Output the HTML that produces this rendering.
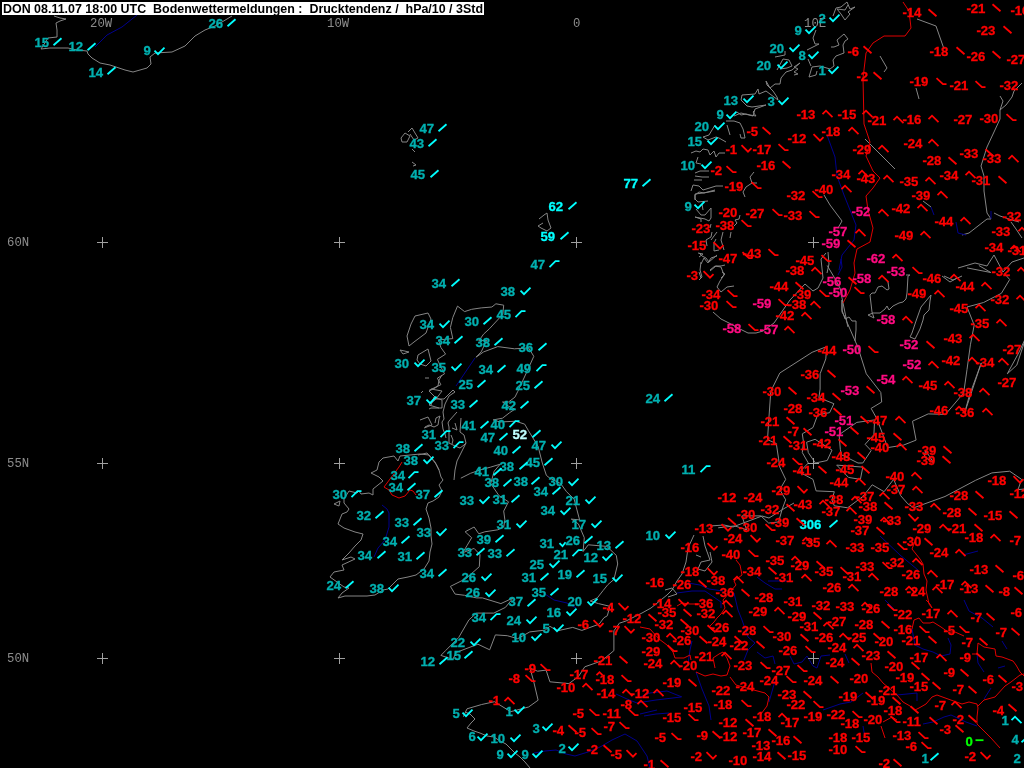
<!DOCTYPE html>
<html><head><meta charset="utf-8"><style>
html,body{margin:0;padding:0;background:#000;overflow:hidden}
svg{display:block;will-change:transform}
</style></head><body>
<svg width="1024" height="768" viewBox="0 0 1024 768">
<rect width="1024" height="768" fill="#000"/>
<g fill="none" stroke-width="1"><polyline points="607.3,615.8 609.9,606.3 598.5,603.6 590.2,601.0 597.3,597.9 603.3,590.3 608.0,584.5 613.9,579.5 617.7,564.0 616.3,555.4 606.8,546.4 588.3,544.8 583.1,551.5 584.3,537.7 578.4,523.9 571.3,519.1 579.6,519.9 574.1,499.0 566.5,491.7 560.6,483.5 549.9,478.2 546.4,475.4 542.3,463.0 538.1,446.4 528.6,430.9 524.6,424.1 515.6,421.2 500.2,422.0 493.1,419.9 502.5,418.2 509.6,412.7 514.9,409.2 508.5,406.2 502.5,402.0 508.5,402.0 514.9,397.2 517.9,391.2 526.9,371.7 533.8,356.3 528.6,347.9 514.4,348.8 497.8,346.6 483.6,351.9 476.0,357.2 481.2,351.9 486.7,340.3 478.8,340.8 483.6,334.1 489.5,328.7 502.8,314.3 503.7,305.2 495.9,303.8 491.9,307.0 481.2,307.9 471.7,309.3 464.6,311.6 457.5,306.1" stroke="#858585" stroke-width="1"/><polyline points="457.5,306.1 452.8,317.5 450.4,327.4 452.8,338.6 438.5,339.9 440.9,347.5 445.6,354.1 437.4,359.4 440.4,366.0 444.5,373.8 437.4,378.2 440.9,384.7 429.1,390.3" stroke="#858585" stroke-width="1"/><polyline points="460.8,478.2 470.5,473.3 480.0,470.0 490.7,467.1 500.2,464.2 494.2,471.2 490.7,483.5 499.0,495.7 508.5,501.8 503.7,511.1 504.9,519.9 503.7,527.0 497.8,529.8 484.8,531.8 478.8,533.8 474.1,527.0 465.1,531.8 471.7,537.7 467.0,545.6 462.7,552.7 474.1,548.4 480.0,554.7 479.3,566.7 465.8,578.7 450.4,586.4 455.1,594.1 464.6,595.3 476.5,597.9 482.4,597.9 500.9,603.6 513.2,597.9 505.4,607.4 493.8,613.1 476.5,613.1 468.9,619.9 458.7,637.5 445.6,650.6 440.9,655.4 452.8,659.4 456.3,652.4 477.9,644.2 489.7,649.8 495.4,634.9 507.3,635.7 517.7,638.7 529.8,631.9 545.2,630.1 549.9,626.3 557.5,630.8 572.7,627.4 581.9,630.4 599.2,624.1 604.0,617.7 607.3,615.8" stroke="#858585" stroke-width="1"/><polyline points="826.7,346.6 812.1,352.3 779.8,373.0 770.8,391.2 768.7,421.2 767.5,439.7 776.3,443.5 778.6,458.9 779.8,467.1 785.7,479.4 779.8,489.6 785.7,499.8 782.2,509.1 778.6,521.9 768.7,523.1 760.9,515.9 741.9,515.9 746.6,529.8 734.8,525.9 718.2,527.8" stroke="#858585" stroke-width="1"/><polyline points="619.8,622.6 619.8,622.6 613.9,630.8 613.9,650.6 601.6,660.9 584.8,666.8 578.4,676.6 568.9,683.6 549.9,681.8 546.1,670.1 537.6,671.2 530.0,668.2 533.3,679.9 538.1,700.2 528.6,707.0 510.6,711.7 494.5,701.7 481.7,704.5 467.0,708.8 463.4,716.7" stroke="#858585" stroke-width="1"/><polyline points="826.7,346.6 825.8,358.9 820.1,373.8 820.1,389.0 818.9,397.7 833.9,403.7 829.6,412.7 817.7,414.8 813.0,427.5 802.3,433.8 803.5,442.2 802.3,452.6 808.3,463.0 799.5,472.1 813.0,479.4 816.1,490.9 834.3,491.7 832.0,499.8 834.3,505.8 847.6,507.8 862.8,496.5 872.2,484.8 884.1,491.7 893.6,479.4 900.7,495.7 907.8,503.8 913.7,507.8 945.0,496.5 975.6,480.3 991.9,472.9 1009.7,471.2 1021.6,479.4 1018.0,489.6 1040.5,487.6" stroke="#858585" stroke-width="1"/><polyline points="815.1,439.3 826.0,446.4 832.0,450.1 827.2,460.5 815.4,463.0 808.3,452.6 806.6,442.2 815.1,439.3" stroke="#858585" stroke-width="1"/><polyline points="874.6,419.9 873.9,434.7 865.1,444.3 871.1,450.6 862.8,463.0 858.0,463.0 841.4,454.7 840.3,449.3 839.1,434.7 856.8,422.4 874.6,419.9" stroke="#858585" stroke-width="1"/><polyline points="836.7,465.1 848.5,477.4 860.4,479.4 862.8,467.1 836.7,465.1" stroke="#858585" stroke-width="1"/><polyline points="925.6,450.6 933.9,463.0 924.4,456.8 925.6,450.6" stroke="#858585" stroke-width="1"/><polyline points="827.2,265.5 835.5,279.5 840.3,288.7 840.7,291.5 846.9,322.0 858.0,347.5 866.3,373.8 880.8,392.5 881.7,402.0 871.1,408.4 877.0,419.0 884.1,438.0 887.7,447.6 903.5,445.1 916.1,440.1 912.5,421.2 928.2,413.9 945.5,414.4 963.7,392.9 967.0,369.5 970.4,344.8 974.2,325.1 967.0,307.0 983.6,302.5 1001.4,293.3 1009.7,279.5 1004.3,273.5" stroke="#858585" stroke-width="1"/><polyline points="1097.4,39.7 1104.5,66.5 1087.9,87.6 1078.4,118.8 1085.5,169.2 1080.8,203.6 1103.8,220.5 1109.2,242.0 1120.4,250.5 1144.8,242.0 1168.5,232.5" stroke="#858585" stroke-width="1"/><polyline points="981.3,362.9 964.7,412.7 969.4,395.5 981.3,362.9" stroke="#858585" stroke-width="1"/><polyline points="1026.3,336.3 1019.2,351.9 1007.3,373.8 1016.8,365.1 1026.3,336.3" stroke="#858585" stroke-width="1"/><polyline points="967.0,267.9 990.8,272.5 978.9,265.5" stroke="#858585" stroke-width="1"/><polyline points="54.0,16.0 60.0,18.0 66.0,19.0 60.0,21.0 56.0,23.0 57.0,30.0 57.0,37.0 48.0,38.0 41.0,49.0 50.0,48.0 68.0,48.0 77.0,50.0 87.0,51.0 88.0,54.0 92.0,58.0 100.0,63.0 110.0,65.0 125.0,70.0 133.0,72.0 147.0,68.0 151.0,64.0 150.0,57.0 155.0,53.0 172.0,52.0 185.0,46.0 195.0,36.0 205.0,30.0 215.0,26.0 222.0,22.0 232.0,16.0" stroke="#858585" stroke-width="1"/><polyline points="539.0,219.0 544.0,215.0 547.0,213.0 548.0,220.0 551.0,228.0 547.0,231.0 541.0,228.0 538.0,226.0 543.0,223.0" stroke="#858585" stroke-width="1"/><polyline points="371.0,473.0 377.0,470.0 379.0,462.0 383.0,458.0 394.0,456.0 398.0,461.0 400.0,456.0 410.0,455.0 420.0,454.0 429.0,455.0 435.0,462.0 439.0,470.0 441.0,477.0 443.0,480.0 439.0,485.0 442.0,491.0 439.0,497.0 433.0,501.0 428.0,503.0 426.0,509.0 429.0,518.0 431.0,528.0 431.0,536.0 432.0,544.0 430.0,552.0 429.0,561.0 424.0,569.0 416.0,575.0 408.0,577.0 398.0,579.0 388.0,589.0 383.0,590.0 375.0,595.0 367.0,596.0 359.0,596.0 345.0,596.0 338.0,598.0 342.0,593.0 349.0,588.0 344.0,587.0 330.0,577.0 334.0,572.0 344.0,570.0 342.0,565.0 355.0,559.0 351.0,557.0 342.0,560.0 349.0,553.0 355.0,546.0 361.0,540.0 363.0,534.0 355.0,532.0 344.0,528.0 338.0,524.0 342.0,514.0 347.0,512.0 349.0,509.0 344.0,503.0 344.0,499.0 349.0,491.0 357.0,493.0 359.0,491.0 361.0,494.0 369.0,493.0 373.0,495.0 373.0,489.0 383.0,481.0 379.0,477.0 371.0,473.0" stroke="#858585" stroke-width="1"/><polyline points="334.0,504.0 340.0,501.0 339.0,506.0 334.0,504.0" stroke="#858585" stroke-width="1"/><polyline points="401.0,138.0 405.0,133.0 410.0,136.0 407.0,142.0 402.0,142.0 401.0,138.0" stroke="#858585" stroke-width="1"/><polyline points="408.0,132.0 412.0,128.0 415.0,133.0 418.0,138.0 414.0,140.0 410.0,134.0" stroke="#858585" stroke-width="1"/><polyline points="412.0,149.0 415.0,152.0" stroke="#858585" stroke-width="1"/><polyline points="412.0,162.0 416.0,165.0 413.0,166.0" stroke="#858585" stroke-width="1"/><polyline points="411.0,324.0 415.0,316.0 428.0,313.0 431.0,319.0 426.0,333.0 414.0,342.0 409.0,346.0 407.0,336.0 411.0,324.0" stroke="#858585" stroke-width="1"/><polyline points="400.0,350.0 409.0,352.0 403.0,354.0 400.0,350.0" stroke="#858585" stroke-width="1"/><polyline points="418.0,355.0 428.0,349.0 431.0,361.0 426.0,366.0 420.0,364.0 417.0,360.0 418.0,355.0" stroke="#858585" stroke-width="1"/><polyline points="431.0,389.0 442.0,391.0 436.0,399.0 429.0,405.0 439.0,408.0" stroke="#858585" stroke-width="1"/><polyline points="420.0,420.0 428.0,417.0 432.0,425.0 424.0,428.0" stroke="#858585" stroke-width="1"/><polyline points="833.0,16.0 836.0,8.0 841.0,7.0 847.0,2.0 850.0,9.0 855.0,7.0 848.0,12.0 850.0,14.0 845.0,20.0 841.0,14.0 837.0,9.0 845.0,10.0 848.0,5.0" stroke="#858585" stroke-width="1"/><polyline points="816.0,30.0 813.0,38.0 815.0,44.0 819.0,44.0 807.0,50.0" stroke="#858585" stroke-width="1"/><polyline points="844.0,34.0 848.0,39.0 845.0,41.0 843.0,45.0 844.0,53.0 836.0,56.0 833.0,60.0 834.0,66.0 830.0,69.0 820.0,66.0 812.0,67.0 809.0,77.0 816.0,75.0 817.0,71.0" stroke="#858585" stroke-width="1"/><polyline points="808.0,59.0 811.0,66.0" stroke="#858585" stroke-width="1"/><polyline points="831.0,47.0 834.0,47.0 839.0,45.0 837.0,40.0 844.0,34.0" stroke="#858585" stroke-width="1"/><polyline points="775.0,57.0 785.0,55.0 785.0,51.0" stroke="#858585" stroke-width="1"/><polyline points="777.0,70.0 783.0,59.0 789.0,60.0 792.0,66.0 787.0,68.0 780.0,69.0" stroke="#858585" stroke-width="1"/><polyline points="800.0,63.0 794.0,67.0 798.0,69.0 794.0,72.0 798.0,74.0 794.0,75.0" stroke="#858585" stroke-width="1"/><polyline points="800.0,63.0 792.0,70.0 786.0,72.0 781.0,78.0 780.0,84.0 775.0,84.0 770.0,88.0 766.0,81.0 767.0,85.0 773.0,91.0 777.0,97.0 778.0,100.0 766.0,91.0 759.0,94.0 758.0,89.0 755.0,94.0 742.0,95.0 741.0,100.0 747.0,106.0 752.0,107.0 766.0,105.0 755.0,109.0 753.0,116.0 741.0,113.0 734.0,116.0" stroke="#858585" stroke-width="1"/><polyline points="737.0,112.0 741.0,115.0 746.0,114.0 750.0,115.0 756.0,116.0 753.0,112.0 755.0,110.0" stroke="#858585" stroke-width="1"/><polyline points="726.0,121.0 734.0,121.0 740.0,123.0 743.0,129.0 744.0,133.0 745.0,138.0 741.0,138.0 740.0,134.0" stroke="#858585" stroke-width="1"/><polyline points="727.0,125.0 730.0,135.0" stroke="#858585" stroke-width="1"/><polyline points="715.0,125.0 709.0,135.0 703.0,137.0 708.0,140.0 716.0,137.0 719.0,138.0 726.0,142.0" stroke="#858585" stroke-width="1"/><polyline points="691.0,153.0 696.0,151.0 700.0,152.0 703.0,149.0 708.0,150.0 710.0,155.0 714.0,151.0 716.0,157.0 719.0,153.0 725.0,153.0" stroke="#858585" stroke-width="1"/><polyline points="698.0,157.0 696.0,163.0 701.0,164.0" stroke="#858585" stroke-width="1"/><polyline points="695.0,173.0 700.0,171.0 709.0,171.0" stroke="#858585" stroke-width="1"/><polyline points="695.0,176.0 702.0,177.0 709.0,177.0" stroke="#858585" stroke-width="1"/><polyline points="694.0,180.0 702.0,180.0" stroke="#858585" stroke-width="1"/><polyline points="691.0,191.0 693.0,185.0 699.0,186.0 703.0,190.0 716.0,186.0 723.0,186.0" stroke="#858585" stroke-width="1"/><polyline points="715.0,191.0 703.0,193.0 695.0,194.0 695.0,200.0" stroke="#858585" stroke-width="1"/><polyline points="754.0,172.0 750.0,177.0 752.0,183.0 746.0,187.0 743.0,192.0 745.0,197.0" stroke="#858585" stroke-width="1"/><polyline points="752.0,183.0 757.0,183.0" stroke="#858585" stroke-width="1"/><polyline points="715.0,190.0 704.0,193.0 699.0,192.0 695.0,195.0 695.0,199.0 698.0,202.0 708.0,201.0" stroke="#858585" stroke-width="1"/><polyline points="696.0,209.0 701.0,215.0 705.0,215.0 711.0,208.0 711.0,218.0 709.0,221.0 705.0,219.0 695.0,217.0 701.0,219.0 701.0,222.0" stroke="#858585" stroke-width="1"/><polyline points="702.0,204.0 703.0,210.0" stroke="#858585" stroke-width="1"/><polyline points="740.0,215.0 739.0,219.0 735.0,220.0 737.0,223.0 734.0,226.0" stroke="#858585" stroke-width="1"/><polyline points="711.0,224.0 710.0,228.0" stroke="#858585" stroke-width="1"/><polyline points="712.0,232.0 711.0,237.0 706.0,240.0 707.0,246.0" stroke="#858585" stroke-width="1"/><polyline points="711.0,240.0 717.0,232.0" stroke="#858585" stroke-width="1"/><polyline points="716.0,239.0 714.0,243.0 714.0,251.0 719.0,250.0" stroke="#858585" stroke-width="1"/><polyline points="723.0,232.0 721.0,240.0 724.0,250.0" stroke="#858585" stroke-width="1"/><polyline points="731.0,232.0 730.0,238.0" stroke="#858585" stroke-width="1"/><polyline points="698.0,253.0 703.0,254.0 699.0,257.0" stroke="#858585" stroke-width="1"/><polyline points="701.0,264.0 704.0,258.0 708.0,263.0 711.0,258.0 717.0,256.0" stroke="#858585" stroke-width="1"/><polyline points="699.0,272.0 701.0,278.0" stroke="#858585" stroke-width="1"/><polyline points="710.0,271.0 716.0,266.0 721.0,266.0 725.0,265.0" stroke="#858585" stroke-width="1"/><polyline points="722.0,272.0 725.0,274.0 721.0,278.0" stroke="#858585" stroke-width="1"/><polyline points="699.0,253.0 702.0,256.0 706.0,258.0 709.0,262.0 717.0,255.0" stroke="#858585" stroke-width="1"/><polyline points="701.0,262.0 700.0,270.0 702.0,277.0 699.0,280.0" stroke="#858585" stroke-width="1"/><polyline points="710.0,270.0 715.0,266.0 721.0,267.0 724.0,275.0 720.0,281.0 717.0,287.0 721.0,292.0 727.0,287.0 734.0,286.0" stroke="#858585" stroke-width="1"/><polyline points="713.0,312.0 721.0,319.0 729.0,323.0 742.0,330.0 748.0,333.0 756.0,333.0 763.0,331.0 774.0,323.0 790.0,300.0 805.0,284.0 813.0,291.0 818.0,288.0 823.0,278.0 821.0,259.0 826.0,253.0" stroke="#858585" stroke-width="1"/><polyline points="827.0,273.0 829.0,264.0 828.0,252.0" stroke="#858585" stroke-width="1"/><polyline points="842.0,300.0 842.0,312.0 846.0,319.0 848.0,327.0" stroke="#858585" stroke-width="1"/><polyline points="906.0,275.0 910.0,275.0 908.0,276.0 907.0,293.0 906.0,299.0 903.0,302.0 899.0,303.0 893.0,306.0 889.0,310.0 887.0,306.0 885.0,309.0 880.0,313.0 873.0,313.0 868.0,315.0 874.0,318.0 872.0,312.0 870.0,295.0 872.0,293.0 875.0,293.0 878.0,287.0 882.0,286.0 887.0,290.0 889.0,289.0 888.0,282.0 885.0,278.0" stroke="#858585" stroke-width="1"/><polyline points="931.0,295.0 930.0,301.0 929.0,310.0 924.0,315.0 923.0,320.0 920.0,329.0 915.0,339.0 910.0,337.0 912.0,333.0 916.0,321.0 921.0,307.0 926.0,301.0 931.0,295.0" stroke="#858585" stroke-width="1"/><polyline points="842.0,300.0 842.0,310.0 845.0,319.0 849.0,317.0 852.0,321.0 856.0,321.0 856.0,330.0 855.0,341.0" stroke="#858585" stroke-width="1"/><polyline points="942.0,276.0 950.0,282.0 957.0,278.0" stroke="#858585" stroke-width="1"/><polyline points="917.0,19.0 936.0,26.0 944.0,49.0" stroke="#858585" stroke-width="1"/><polyline points="880.0,56.0 887.0,68.0 884.0,72.0" stroke="#858585" stroke-width="1"/><polyline points="916.0,88.0 919.0,99.0" stroke="#858585" stroke-width="1"/><polyline points="1022.0,83.0 1014.0,91.0 1012.0,97.0 1006.0,105.0 1000.0,110.0 1003.0,101.0 1000.0,96.0" stroke="#858585" stroke-width="1"/><polyline points="1000.0,110.0 1000.0,119.0 994.0,132.0 987.0,147.0 981.0,166.0 984.0,176.0 984.0,191.0 987.0,213.0 991.0,219.0 987.0,219.0 978.0,226.0 969.0,233.0 962.0,235.0" stroke="#858585" stroke-width="1"/><polyline points="994.0,213.0 1000.0,216.0 1009.0,219.0 1019.0,222.0" stroke="#858585" stroke-width="1"/><polyline points="1011.0,222.0 1016.0,229.0 1022.0,238.0" stroke="#858585" stroke-width="1"/><polyline points="958.0,268.0 975.0,263.0 987.0,266.0 994.0,255.0 1003.0,272.0 1012.0,262.0 1024.0,258.0" stroke="#858585" stroke-width="1"/><polyline points="944.0,276.0 953.0,280.0 962.0,276.0" stroke="#858585" stroke-width="1"/><polyline points="923.0,201.0 931.0,207.0" stroke="#858585" stroke-width="1"/><polyline points="824.0,195.0 830.0,205.0 842.0,221.0 838.0,228.0" stroke="#858585" stroke-width="1"/><polyline points="865.0,139.0 880.0,154.0 895.0,169.0" stroke="#858585" stroke-width="1"/><polyline points="667.0,595.0 651.0,608.0 642.0,613.0 626.0,621.0 620.0,623.0" stroke="#858585" stroke-width="1"/><polyline points="694.0,535.0 688.0,548.0 686.0,562.0 682.0,574.0 677.0,581.0 672.0,590.0 667.0,595.0" stroke="#858585" stroke-width="1"/><polyline points="703.0,536.0 705.0,546.0 710.0,560.0 701.0,562.0 698.0,569.0 705.0,571.0 712.0,562.0 710.0,552.0" stroke="#858585" stroke-width="1"/><polyline points="696.0,555.0 701.0,557.0" stroke="#858585" stroke-width="1"/><polyline points="665.0,590.0 672.0,588.0 677.0,594.0 668.0,597.0" stroke="#858585" stroke-width="1"/><polyline points="710.0,526.0 724.0,525.0 733.0,527.0 738.0,525.0 762.0,516.0 769.0,518.0 785.0,508.0 794.0,503.0" stroke="#858585" stroke-width="1"/><polyline points="465.0,712.0 470.0,714.0 475.0,719.0 471.0,723.0 467.0,728.0 474.0,731.0 480.0,733.0 487.0,736.0 494.0,737.0 500.0,741.0 506.0,744.0 510.0,748.0 515.0,753.0 520.0,757.0 525.0,762.0 530.0,768.0" stroke="#858585" stroke-width="1"/><polyline points="453.0,390.0 448.0,395.0 444.0,399.0 436.0,399.0 435.0,397.0 431.0,393.0 429.0,391.0 435.0,388.0 438.0,386.0 439.0,380.0 442.0,375.0" stroke="#858585" stroke-width="1"/><polyline points="429.0,409.0 431.0,408.0 442.0,408.0 442.0,400.0 434.0,397.0 431.0,405.0" stroke="#858585" stroke-width="1"/><polyline points="453.0,390.0 455.0,392.0 449.0,396.0 445.0,404.0 443.0,412.0 444.0,419.0 442.0,422.0 443.0,429.0 445.0,434.0 446.0,438.0" stroke="#858585" stroke-width="1"/><polyline points="425.0,427.0 429.0,425.0 434.0,427.0 438.0,425.0 439.0,419.0 440.0,416.0 436.0,418.0 435.0,423.0" stroke="#858585" stroke-width="1"/><polyline points="457.0,412.0 449.0,421.0 448.0,423.0 449.0,427.0 449.0,443.0 455.0,446.0 460.0,448.0 464.0,445.0 466.0,443.0 464.0,435.0 460.0,432.0 461.0,418.0" stroke="#858585" stroke-width="1"/><polyline points="451.0,435.0 453.0,440.0 452.0,444.0" stroke="#858585" stroke-width="1"/><polyline points="455.0,423.0 457.0,430.0 452.0,428.0" stroke="#858585" stroke-width="1"/><polyline points="466.0,443.0 461.0,453.0 457.0,461.0 455.0,470.0 454.0,480.0" stroke="#858585" stroke-width="1"/><polyline points="418.0,455.0 427.0,453.0 432.0,459.0 436.0,464.0 439.0,470.0" stroke="#858585" stroke-width="1"/><polyline points="421.0,393.0 423.0,391.0" stroke="#858585" stroke-width="1"/><polyline points="425.0,378.0 429.0,378.0" stroke="#858585" stroke-width="1"/><polyline points="534.0,753.0 545.0,751.0 556.0,750.0 566.0,754.0 575.0,756.0 588.0,752.0 600.0,747.0 612.0,740.0 625.0,734.0 637.0,741.0 647.0,756.0 650.0,768.0" stroke="#00008c" stroke-width="1"/><polyline points="616.0,694.0 627.0,699.0 637.0,703.0 656.0,700.0 681.0,697.0" stroke="#00008c" stroke-width="1"/><polyline points="644.0,716.0 656.0,714.0 669.0,713.0" stroke="#00008c" stroke-width="1"/><polyline points="880.0,536.0 900.0,555.0 918.0,570.0" stroke="#00008c" stroke-width="1"/><polyline points="963.0,555.0 978.0,551.0" stroke="#00008c" stroke-width="1"/><polyline points="768.0,581.0 787.0,581.0" stroke="#00008c" stroke-width="1"/><polyline points="885.0,600.0 894.0,609.0" stroke="#00008c" stroke-width="1"/><polyline points="964.0,600.0 969.0,611.0 982.0,618.0 993.0,627.0" stroke="#00008c" stroke-width="1"/><polyline points="912.0,629.0 915.0,645.0 923.0,649.0 933.0,652.0 941.0,656.0 950.0,654.0 951.0,645.0 948.0,638.0" stroke="#00008c" stroke-width="1"/><polyline points="977.0,654.0 978.0,663.0 984.0,672.0" stroke="#00008c" stroke-width="1"/><polyline points="1002.0,641.0 1007.0,649.0" stroke="#00008c" stroke-width="1"/><polyline points="998.0,668.0 1005.0,666.0" stroke="#00008c" stroke-width="1"/><polyline points="991.0,688.0 984.0,699.0" stroke="#00008c" stroke-width="1"/><polyline points="897.0,695.0 917.0,693.0 917.0,701.0" stroke="#00008c" stroke-width="1"/><polyline points="923.0,724.0 933.0,722.0 944.0,717.0 951.0,715.0 966.0,722.0 977.0,726.0" stroke="#00008c" stroke-width="1"/><polyline points="840.0,704.0 851.0,702.0 863.0,693.0" stroke="#00008c" stroke-width="1"/><polyline points="845.0,654.0 849.0,663.0" stroke="#00008c" stroke-width="1"/><polyline points="863.0,726.0 865.0,738.0" stroke="#00008c" stroke-width="1"/><polyline points="757.0,577.0 765.0,583.0 775.0,589.0 782.0,589.0" stroke="#00008c" stroke-width="1"/><polyline points="688.0,583.0 700.0,585.0 709.0,589.0 723.0,591.0" stroke="#00008c" stroke-width="1"/><polyline points="677.0,593.0 692.0,591.0 705.0,591.0 721.0,602.0 721.0,608.0" stroke="#00008c" stroke-width="1"/><polyline points="734.0,593.0 738.0,610.0 742.0,620.0 748.0,637.0 755.0,643.0 748.0,650.0 744.0,660.0" stroke="#00008c" stroke-width="1"/><polyline points="757.0,652.0 765.0,658.0 773.0,656.0 775.0,664.0" stroke="#00008c" stroke-width="1"/><polyline points="790.0,656.0 794.0,664.0 802.0,662.0 807.0,656.0 813.0,666.0 817.0,668.0 821.0,656.0 830.0,655.0" stroke="#00008c" stroke-width="1"/><polyline points="692.0,641.0 690.0,650.0 688.0,664.0" stroke="#00008c" stroke-width="1"/><polyline points="696.0,672.0 702.0,689.0 709.0,706.0 711.0,720.0" stroke="#00008c" stroke-width="1"/><polyline points="640.0,697.0 650.0,693.0 667.0,691.0 682.0,697.0" stroke="#00008c" stroke-width="1"/><polyline points="775.0,681.0 769.0,702.0" stroke="#00008c" stroke-width="1"/><polyline points="823.0,710.0 840.0,704.0" stroke="#00008c" stroke-width="1"/><polyline points="640.0,714.0 657.0,710.0" stroke="#00008c" stroke-width="1"/><polyline points="545.0,594.0 554.0,600.0 567.0,603.0 576.0,608.0" stroke="#00008c" stroke-width="1"/><polyline points="137.0,15.0 122.0,27.0 107.0,35.0 95.0,47.0" stroke="#00008c" stroke-width="1"/><polyline points="382.0,505.0 387.0,509.0 389.0,513.0 389.0,527.0 385.0,540.0 378.0,548.0 374.0,557.0" stroke="#00008c" stroke-width="1"/><polyline points="475.0,358.0 456.0,386.0" stroke="#00008c" stroke-width="1"/><polyline points="903.0,2.0 909.0,11.0 911.0,28.0 905.0,36.0 884.0,36.0 873.0,43.0 866.0,53.0 863.0,78.0 864.0,124.0 870.0,142.0 866.0,156.0 873.0,171.0 880.0,178.0 873.0,188.0 866.0,196.0 868.0,210.0 873.0,228.0 870.0,242.0 857.0,249.0 854.0,263.0 855.0,273.0 850.0,290.0 843.0,303.0" stroke="#e00000" stroke-width="1"/><polyline points="841.0,259.0 842.0,267.0 838.0,275.0" stroke="#00008c" stroke-width="1"/><polyline points="827.0,135.0 835.0,157.0 837.0,176.0 844.0,195.0 850.0,210.0 856.0,225.0 854.0,240.0 842.0,255.0 839.0,270.0" stroke="#00008c" stroke-width="1"/><polyline points="931.0,207.0 934.0,215.0" stroke="#00008c" stroke-width="1"/><polyline points="956.0,222.0 958.0,233.0 966.0,235.0" stroke="#00008c" stroke-width="1"/><polyline points="991.0,211.0 991.0,219.0" stroke="#00008c" stroke-width="1"/><polyline points="917.0,536.0 912.0,549.0 920.0,559.0 923.0,564.0 924.0,574.0 927.0,581.0 926.0,590.0 929.0,604.0 932.0,608.0" stroke="#e00000" stroke-width="1"/><polyline points="926.0,600.0 930.0,604.0 932.0,608.0" stroke="#e00000" stroke-width="1"/><polyline points="919.0,618.0 923.0,623.0 930.0,623.0 933.0,622.0 941.0,627.0 948.0,632.0 955.0,632.0 964.0,636.0" stroke="#e00000" stroke-width="1"/><polyline points="919.0,618.0 914.0,620.0 912.0,629.0" stroke="#e00000" stroke-width="1"/><polyline points="978.0,643.0 984.0,647.0 995.0,649.0 996.0,656.0 1002.0,657.0 1013.0,661.0 1016.0,665.0 1020.0,672.0 1024.0,676.0" stroke="#e00000" stroke-width="1"/><polyline points="978.0,643.0 977.0,654.0 972.0,654.0" stroke="#e00000" stroke-width="1"/><polyline points="871.0,663.0 872.0,672.0 878.0,677.0 883.0,683.0 890.0,689.0 897.0,695.0 903.0,702.0 910.0,706.0 915.0,710.0 919.0,708.0 926.0,704.0 932.0,697.0 937.0,695.0 948.0,699.0 962.0,704.0 969.0,702.0 977.0,704.0 978.0,708.0 977.0,717.0 977.0,724.0 982.0,729.0 991.0,738.0 1000.0,748.0" stroke="#e00000" stroke-width="1"/><polyline points="978.0,706.0 984.0,700.0 995.0,697.0 1005.0,686.0 1011.0,682.0 1020.0,675.0 1024.0,674.0" stroke="#e00000" stroke-width="1"/><polyline points="883.0,722.0 892.0,717.0 897.0,720.0" stroke="#e00000" stroke-width="1"/><polyline points="881.0,726.0 885.0,738.0" stroke="#e00000" stroke-width="1"/><polyline points="736.0,560.0 740.0,565.0 742.0,575.0 734.0,581.0 736.0,585.0 730.0,592.0 723.0,600.0 725.0,608.0 721.0,614.0 717.0,618.0 714.0,622.0 709.0,627.0 713.0,631.0" stroke="#e00000" stroke-width="1"/><polyline points="677.0,606.0 682.0,603.0 690.0,604.0 700.0,604.0" stroke="#e00000" stroke-width="1"/><polyline points="640.0,627.0 650.0,629.0 659.0,639.0 667.0,645.0 673.0,652.0 675.0,658.0 684.0,658.0 690.0,655.0 691.0,660.0" stroke="#e00000" stroke-width="1"/><polyline points="696.0,672.0 705.0,676.0 713.0,674.0 721.0,676.0 727.0,675.0 730.0,666.0 727.0,658.0 723.0,652.0 719.0,654.0 713.0,658.0 715.0,668.0" stroke="#e00000" stroke-width="1"/><polyline points="730.0,677.0 736.0,685.0 750.0,689.0 765.0,693.0 769.0,697.0 767.0,706.0 761.0,714.0" stroke="#e00000" stroke-width="1"/><polyline points="723.0,647.0 725.0,641.0 723.0,638.0" stroke="#e00000" stroke-width="1"/><polyline points="402.0,462.0 399.0,467.0 384.0,487.0 389.0,490.0 392.0,495.0 399.0,498.0 405.0,496.0 410.0,490.0 413.0,491.0 416.0,495.0" stroke="#e00000" stroke-width="1"/></g>
<path d="M97,242.5H108M102.5,237V248" stroke="#a0a0a0" stroke-width="1"/><path d="M97,463.5H108M102.5,458V469" stroke="#a0a0a0" stroke-width="1"/><path d="M97,658.5H108M102.5,653V664" stroke="#a0a0a0" stroke-width="1"/><path d="M334,242.5H345M339.5,237V248" stroke="#a0a0a0" stroke-width="1"/><path d="M334,463.5H345M339.5,458V469" stroke="#a0a0a0" stroke-width="1"/><path d="M334,658.5H345M339.5,653V664" stroke="#a0a0a0" stroke-width="1"/><path d="M571,242.5H582M576.5,237V248" stroke="#a0a0a0" stroke-width="1"/><path d="M571,463.5H582M576.5,458V469" stroke="#a0a0a0" stroke-width="1"/><path d="M571,658.5H582M576.5,653V664" stroke="#a0a0a0" stroke-width="1"/><path d="M808,242.5H819M813.5,237V248" stroke="#a0a0a0" stroke-width="1"/><path d="M808,463.5H819M813.5,458V469" stroke="#a0a0a0" stroke-width="1"/><path d="M808,658.5H819M813.5,653V664" stroke="#a0a0a0" stroke-width="1"/>
<g font-family="Liberation Mono, monospace" font-size="12.3" fill="#8c8c8c"><text x="90" y="26.5">20W</text><text x="327" y="26.5">10W</text><text x="573" y="26.5">0</text><text x="804" y="26.5">10E</text><text x="7" y="245.5">60N</text><text x="7" y="466.5">55N</text><text x="7" y="661.5">50N</text></g>
<g font-family="Liberation Sans, sans-serif" font-weight="bold" font-size="13.2" stroke-width="0.3" style="paint-order:stroke"><text x="34.4" y="47.1" fill="#00b0b0" stroke="#00b0b0">15</text><text x="68.4" y="51.1" fill="#00b0b0" stroke="#00b0b0">12</text><text x="143.4" y="55.1" fill="#00b0b0" stroke="#00b0b0">9</text><text x="88.4" y="77.1" fill="#00b0b0" stroke="#00b0b0">14</text><text x="208.4" y="28.1" fill="#00b0b0" stroke="#00b0b0">26</text><text x="419.4" y="133.1" fill="#00b0b0" stroke="#00b0b0">47</text><text x="409.4" y="148.1" fill="#00b0b0" stroke="#00b0b0">43</text><text x="410.4" y="179.1" fill="#00b0b0" stroke="#00b0b0">45</text><text x="723.4" y="105.1" fill="#00b0b0" stroke="#00b0b0">13</text><text x="716.4" y="119.1" fill="#00b0b0" stroke="#00b0b0">9</text><text x="694.4" y="131.1" fill="#00b0b0" stroke="#00b0b0">20</text><text x="687.4" y="146.1" fill="#00b0b0" stroke="#00b0b0">15</text><text x="680.4" y="170.1" fill="#00b0b0" stroke="#00b0b0">10</text><text x="623.4" y="188.1" fill="#00ffff" stroke="#00ffff">77</text><text x="746.4" y="136.1" fill="#ff0000" stroke="#ff0000">-5</text><text x="725.4" y="154.1" fill="#ff0000" stroke="#ff0000">-1</text><text x="752.4" y="154.1" fill="#ff0000" stroke="#ff0000">-17</text><text x="710.4" y="175.1" fill="#ff0000" stroke="#ff0000">-2</text><text x="756.4" y="170.1" fill="#ff0000" stroke="#ff0000">-16</text><text x="818.4" y="23.1" fill="#00b0b0" stroke="#00b0b0">2</text><text x="794.4" y="35.1" fill="#00b0b0" stroke="#00b0b0">9</text><text x="769.4" y="53.1" fill="#00b0b0" stroke="#00b0b0">20</text><text x="798.4" y="60.1" fill="#00b0b0" stroke="#00b0b0">8</text><text x="818.4" y="75.1" fill="#00b0b0" stroke="#00b0b0">1</text><text x="756.4" y="70.1" fill="#00b0b0" stroke="#00b0b0">20</text><text x="767.4" y="106.1" fill="#00b0b0" stroke="#00b0b0">3</text><text x="902.4" y="17.1" fill="#ff0000" stroke="#ff0000">-14</text><text x="966.4" y="13.1" fill="#ff0000" stroke="#ff0000">-21</text><text x="976.4" y="35.1" fill="#ff0000" stroke="#ff0000">-23</text><text x="847.4" y="56.1" fill="#ff0000" stroke="#ff0000">-6</text><text x="929.4" y="56.1" fill="#ff0000" stroke="#ff0000">-18</text><text x="966.4" y="61.1" fill="#ff0000" stroke="#ff0000">-26</text><text x="1006.4" y="64.1" fill="#ff0000" stroke="#ff0000">-27</text><text x="856.4" y="81.1" fill="#ff0000" stroke="#ff0000">-2</text><text x="909.4" y="86.1" fill="#ff0000" stroke="#ff0000">-19</text><text x="949.4" y="90.1" fill="#ff0000" stroke="#ff0000">-21</text><text x="999.4" y="90.1" fill="#ff0000" stroke="#ff0000">-32</text><text x="796.4" y="119.1" fill="#ff0000" stroke="#ff0000">-13</text><text x="837.4" y="119.1" fill="#ff0000" stroke="#ff0000">-15</text><text x="867.4" y="125.1" fill="#ff0000" stroke="#ff0000">-21</text><text x="902.4" y="124.1" fill="#ff0000" stroke="#ff0000">-16</text><text x="953.4" y="124.1" fill="#ff0000" stroke="#ff0000">-27</text><text x="979.4" y="123.1" fill="#ff0000" stroke="#ff0000">-30</text><text x="821.4" y="136.1" fill="#ff0000" stroke="#ff0000">-18</text><text x="787.4" y="143.1" fill="#ff0000" stroke="#ff0000">-12</text><text x="852.4" y="154.1" fill="#ff0000" stroke="#ff0000">-29</text><text x="903.4" y="148.1" fill="#ff0000" stroke="#ff0000">-24</text><text x="959.4" y="158.1" fill="#ff0000" stroke="#ff0000">-33</text><text x="922.4" y="165.1" fill="#ff0000" stroke="#ff0000">-28</text><text x="982.4" y="163.1" fill="#ff0000" stroke="#ff0000">-33</text><text x="831.4" y="179.1" fill="#ff0000" stroke="#ff0000">-34</text><text x="856.4" y="183.1" fill="#ff0000" stroke="#ff0000">-43</text><text x="899.4" y="186.1" fill="#ff0000" stroke="#ff0000">-35</text><text x="939.4" y="180.1" fill="#ff0000" stroke="#ff0000">-34</text><text x="971.4" y="185.1" fill="#ff0000" stroke="#ff0000">-31</text><text x="814.4" y="194.1" fill="#ff0000" stroke="#ff0000">-40</text><text x="548.4" y="211.1" fill="#00ffff" stroke="#00ffff">62</text><text x="540.4" y="241.1" fill="#00ffff" stroke="#00ffff">59</text><text x="530.4" y="269.1" fill="#00b0b0" stroke="#00b0b0">47</text><text x="518.4" y="352.1" fill="#00b0b0" stroke="#00b0b0">36</text><text x="516.4" y="373.1" fill="#00b0b0" stroke="#00b0b0">49</text><text x="684.4" y="211.1" fill="#00b0b0" stroke="#00b0b0">9</text><text x="724.4" y="191.1" fill="#ff0000" stroke="#ff0000">-19</text><text x="718.4" y="217.1" fill="#ff0000" stroke="#ff0000">-20</text><text x="745.4" y="218.1" fill="#ff0000" stroke="#ff0000">-27</text><text x="715.4" y="230.1" fill="#ff0000" stroke="#ff0000">-38</text><text x="691.4" y="233.1" fill="#ff0000" stroke="#ff0000">-23</text><text x="687.4" y="250.1" fill="#ff0000" stroke="#ff0000">-15</text><text x="742.4" y="258.1" fill="#ff0000" stroke="#ff0000">-43</text><text x="718.4" y="263.1" fill="#ff0000" stroke="#ff0000">-47</text><text x="686.4" y="280.1" fill="#ff0000" stroke="#ff0000">-3</text><text x="701.4" y="299.1" fill="#ff0000" stroke="#ff0000">-34</text><text x="699.4" y="310.1" fill="#ff0000" stroke="#ff0000">-30</text><text x="752.4" y="308.1" fill="#ff0a80" stroke="#ff0a80">-59</text><text x="722.4" y="333.1" fill="#ff0a80" stroke="#ff0a80">-58</text><text x="759.4" y="334.1" fill="#ff0a80" stroke="#ff0a80">-57</text><text x="786.4" y="200.1" fill="#ff0000" stroke="#ff0000">-32</text><text x="783.4" y="220.1" fill="#ff0000" stroke="#ff0000">-33</text><text x="911.4" y="200.1" fill="#ff0000" stroke="#ff0000">-39</text><text x="891.4" y="213.1" fill="#ff0000" stroke="#ff0000">-42</text><text x="851.4" y="216.1" fill="#ff0a80" stroke="#ff0a80">-52</text><text x="934.4" y="226.1" fill="#ff0000" stroke="#ff0000">-44</text><text x="1002.4" y="221.1" fill="#ff0000" stroke="#ff0000">-32</text><text x="991.4" y="236.1" fill="#ff0000" stroke="#ff0000">-33</text><text x="828.4" y="236.1" fill="#ff0a80" stroke="#ff0a80">-57</text><text x="894.4" y="240.1" fill="#ff0000" stroke="#ff0000">-49</text><text x="821.4" y="248.1" fill="#ff0a80" stroke="#ff0a80">-59</text><text x="984.4" y="252.1" fill="#ff0000" stroke="#ff0000">-34</text><text x="1007.4" y="255.1" fill="#ff0000" stroke="#ff0000">-31</text><text x="866.4" y="263.1" fill="#ff0a80" stroke="#ff0a80">-62</text><text x="795.4" y="265.1" fill="#ff0000" stroke="#ff0000">-45</text><text x="785.4" y="275.1" fill="#ff0000" stroke="#ff0000">-38</text><text x="886.4" y="276.1" fill="#ff0a80" stroke="#ff0a80">-53</text><text x="991.4" y="276.1" fill="#ff0000" stroke="#ff0000">-32</text><text x="822.4" y="286.1" fill="#ff0a80" stroke="#ff0a80">-56</text><text x="852.4" y="283.1" fill="#ff0a80" stroke="#ff0a80">-58</text><text x="922.4" y="283.1" fill="#ff0000" stroke="#ff0000">-46</text><text x="769.4" y="291.1" fill="#ff0000" stroke="#ff0000">-44</text><text x="955.4" y="291.1" fill="#ff0000" stroke="#ff0000">-44</text><text x="828.4" y="297.1" fill="#ff0a80" stroke="#ff0a80">-50</text><text x="792.4" y="299.1" fill="#ff0000" stroke="#ff0000">-39</text><text x="907.4" y="298.1" fill="#ff0000" stroke="#ff0000">-49</text><text x="990.4" y="304.1" fill="#ff0000" stroke="#ff0000">-32</text><text x="787.4" y="309.1" fill="#ff0000" stroke="#ff0000">-38</text><text x="949.4" y="313.1" fill="#ff0000" stroke="#ff0000">-45</text><text x="775.4" y="320.1" fill="#ff0000" stroke="#ff0000">-42</text><text x="970.4" y="328.1" fill="#ff0000" stroke="#ff0000">-35</text><text x="876.4" y="324.1" fill="#ff0a80" stroke="#ff0a80">-58</text><text x="943.4" y="343.1" fill="#ff0000" stroke="#ff0000">-43</text><text x="899.4" y="349.1" fill="#ff0a80" stroke="#ff0a80">-52</text><text x="817.4" y="355.1" fill="#ff0000" stroke="#ff0000">-44</text><text x="842.4" y="354.1" fill="#ff0a80" stroke="#ff0a80">-50</text><text x="1002.4" y="354.1" fill="#ff0000" stroke="#ff0000">-27</text><text x="902.4" y="369.1" fill="#ff0a80" stroke="#ff0a80">-52</text><text x="941.4" y="365.1" fill="#ff0000" stroke="#ff0000">-42</text><text x="975.4" y="367.1" fill="#ff0000" stroke="#ff0000">-34</text><text x="431.4" y="288.1" fill="#00b0b0" stroke="#00b0b0">34</text><text x="500.4" y="296.1" fill="#00b0b0" stroke="#00b0b0">38</text><text x="496.4" y="319.1" fill="#00b0b0" stroke="#00b0b0">45</text><text x="464.4" y="326.1" fill="#00b0b0" stroke="#00b0b0">30</text><text x="419.4" y="329.1" fill="#00b0b0" stroke="#00b0b0">34</text><text x="435.4" y="345.1" fill="#00b0b0" stroke="#00b0b0">34</text><text x="475.4" y="347.1" fill="#00b0b0" stroke="#00b0b0">38</text><text x="394.4" y="368.1" fill="#00b0b0" stroke="#00b0b0">30</text><text x="431.4" y="372.1" fill="#00b0b0" stroke="#00b0b0">35</text><text x="478.4" y="374.1" fill="#00b0b0" stroke="#00b0b0">34</text><text x="458.4" y="389.1" fill="#00b0b0" stroke="#00b0b0">25</text><text x="515.4" y="390.1" fill="#00b0b0" stroke="#00b0b0">25</text><text x="406.4" y="405.1" fill="#00b0b0" stroke="#00b0b0">37</text><text x="450.4" y="409.1" fill="#00b0b0" stroke="#00b0b0">33</text><text x="501.4" y="410.1" fill="#00b0b0" stroke="#00b0b0">42</text><text x="461.4" y="430.1" fill="#00b0b0" stroke="#00b0b0">41</text><text x="490.4" y="429.1" fill="#00b0b0" stroke="#00b0b0">40</text><text x="421.4" y="439.1" fill="#00b0b0" stroke="#00b0b0">31</text><text x="512.4" y="439.1" fill="#c0ffff" stroke="#c0ffff">52</text><text x="480.4" y="442.1" fill="#00b0b0" stroke="#00b0b0">47</text><text x="434.4" y="450.1" fill="#00b0b0" stroke="#00b0b0">33</text><text x="395.4" y="453.1" fill="#00b0b0" stroke="#00b0b0">38</text><text x="493.4" y="455.1" fill="#00b0b0" stroke="#00b0b0">40</text><text x="531.4" y="450.1" fill="#00b0b0" stroke="#00b0b0">47</text><text x="403.4" y="465.1" fill="#00b0b0" stroke="#00b0b0">38</text><text x="525.4" y="467.1" fill="#00b0b0" stroke="#00b0b0">45</text><text x="499.4" y="471.1" fill="#00b0b0" stroke="#00b0b0">38</text><text x="474.4" y="476.1" fill="#00b0b0" stroke="#00b0b0">41</text><text x="390.4" y="480.1" fill="#00b0b0" stroke="#00b0b0">34</text><text x="484.4" y="487.1" fill="#00b0b0" stroke="#00b0b0">38</text><text x="513.4" y="486.1" fill="#00b0b0" stroke="#00b0b0">38</text><text x="548.4" y="486.1" fill="#00b0b0" stroke="#00b0b0">30</text><text x="388.4" y="492.1" fill="#00b0b0" stroke="#00b0b0">34</text><text x="415.4" y="499.1" fill="#00b0b0" stroke="#00b0b0">37</text><text x="533.4" y="496.1" fill="#00b0b0" stroke="#00b0b0">34</text><text x="459.4" y="505.1" fill="#00b0b0" stroke="#00b0b0">33</text><text x="492.4" y="504.1" fill="#00b0b0" stroke="#00b0b0">31</text><text x="540.4" y="515.1" fill="#00b0b0" stroke="#00b0b0">34</text><text x="394.4" y="527.1" fill="#00b0b0" stroke="#00b0b0">33</text><text x="496.4" y="529.1" fill="#00b0b0" stroke="#00b0b0">31</text><text x="565.4" y="505.1" fill="#00b0b0" stroke="#00b0b0">21</text><text x="332.4" y="499.1" fill="#00b0b0" stroke="#00b0b0">30</text><text x="356.4" y="520.1" fill="#00b0b0" stroke="#00b0b0">32</text><text x="416.4" y="537.1" fill="#00b0b0" stroke="#00b0b0">33</text><text x="382.4" y="546.1" fill="#00b0b0" stroke="#00b0b0">34</text><text x="357.4" y="560.1" fill="#00b0b0" stroke="#00b0b0">34</text><text x="397.4" y="561.1" fill="#00b0b0" stroke="#00b0b0">31</text><text x="419.4" y="578.1" fill="#00b0b0" stroke="#00b0b0">34</text><text x="326.4" y="590.1" fill="#00b0b0" stroke="#00b0b0">24</text><text x="369.4" y="593.1" fill="#00b0b0" stroke="#00b0b0">38</text><text x="571.4" y="529.1" fill="#00b0b0" stroke="#00b0b0">17</text><text x="476.4" y="544.1" fill="#00b0b0" stroke="#00b0b0">39</text><text x="539.4" y="548.1" fill="#00b0b0" stroke="#00b0b0">31</text><text x="565.4" y="545.1" fill="#00b0b0" stroke="#00b0b0">26</text><text x="457.4" y="557.1" fill="#00b0b0" stroke="#00b0b0">33</text><text x="487.4" y="558.1" fill="#00b0b0" stroke="#00b0b0">33</text><text x="553.4" y="559.1" fill="#00b0b0" stroke="#00b0b0">21</text><text x="583.4" y="562.1" fill="#00b0b0" stroke="#00b0b0">12</text><text x="596.4" y="550.1" fill="#00b0b0" stroke="#00b0b0">13</text><text x="529.4" y="569.1" fill="#00b0b0" stroke="#00b0b0">25</text><text x="461.4" y="582.1" fill="#00b0b0" stroke="#00b0b0">26</text><text x="521.4" y="582.1" fill="#00b0b0" stroke="#00b0b0">31</text><text x="557.4" y="579.1" fill="#00b0b0" stroke="#00b0b0">19</text><text x="592.4" y="583.1" fill="#00b0b0" stroke="#00b0b0">15</text><text x="465.4" y="597.1" fill="#00b0b0" stroke="#00b0b0">26</text><text x="531.4" y="597.1" fill="#00b0b0" stroke="#00b0b0">35</text><text x="508.4" y="606.1" fill="#00b0b0" stroke="#00b0b0">37</text><text x="567.4" y="606.1" fill="#00b0b0" stroke="#00b0b0">20</text><text x="546.4" y="617.1" fill="#00b0b0" stroke="#00b0b0">16</text><text x="471.4" y="622.1" fill="#00b0b0" stroke="#00b0b0">34</text><text x="506.4" y="625.1" fill="#00b0b0" stroke="#00b0b0">24</text><text x="542.4" y="633.1" fill="#00b0b0" stroke="#00b0b0">5</text><text x="511.4" y="642.1" fill="#00b0b0" stroke="#00b0b0">10</text><text x="450.4" y="647.1" fill="#00b0b0" stroke="#00b0b0">22</text><text x="446.4" y="660.1" fill="#00b0b0" stroke="#00b0b0">15</text><text x="420.4" y="666.1" fill="#00b0b0" stroke="#00b0b0">12</text><text x="645.4" y="403.1" fill="#00b0b0" stroke="#00b0b0">24</text><text x="681.4" y="474.1" fill="#00b0b0" stroke="#00b0b0">11</text><text x="645.4" y="540.1" fill="#00b0b0" stroke="#00b0b0">10</text><text x="800.4" y="379.1" fill="#ff0000" stroke="#ff0000">-36</text><text x="876.4" y="384.1" fill="#ff0a80" stroke="#ff0a80">-54</text><text x="918.4" y="390.1" fill="#ff0000" stroke="#ff0000">-45</text><text x="762.4" y="396.1" fill="#ff0000" stroke="#ff0000">-30</text><text x="840.4" y="395.1" fill="#ff0a80" stroke="#ff0a80">-53</text><text x="806.4" y="402.1" fill="#ff0000" stroke="#ff0000">-34</text><text x="783.4" y="413.1" fill="#ff0000" stroke="#ff0000">-28</text><text x="808.4" y="417.1" fill="#ff0000" stroke="#ff0000">-36</text><text x="760.4" y="426.1" fill="#ff0000" stroke="#ff0000">-21</text><text x="834.4" y="425.1" fill="#ff0a80" stroke="#ff0a80">-51</text><text x="824.4" y="436.1" fill="#ff0a80" stroke="#ff0a80">-51</text><text x="868.4" y="425.1" fill="#ff0000" stroke="#ff0000">-47</text><text x="787.4" y="436.1" fill="#ff0000" stroke="#ff0000">-7</text><text x="758.4" y="445.1" fill="#ff0000" stroke="#ff0000">-21</text><text x="866.4" y="442.1" fill="#ff0000" stroke="#ff0000">-45</text><text x="788.4" y="450.1" fill="#ff0000" stroke="#ff0000">-31</text><text x="812.4" y="448.1" fill="#ff0000" stroke="#ff0000">-42</text><text x="870.4" y="452.1" fill="#ff0000" stroke="#ff0000">-40</text><text x="917.4" y="455.1" fill="#ff0000" stroke="#ff0000">-39</text><text x="916.4" y="465.1" fill="#ff0000" stroke="#ff0000">-39</text><text x="831.4" y="461.1" fill="#ff0000" stroke="#ff0000">-48</text><text x="766.4" y="467.1" fill="#ff0000" stroke="#ff0000">-24</text><text x="792.4" y="475.1" fill="#ff0000" stroke="#ff0000">-41</text><text x="835.4" y="474.1" fill="#ff0000" stroke="#ff0000">-45</text><text x="885.4" y="481.1" fill="#ff0000" stroke="#ff0000">-40</text><text x="829.4" y="487.1" fill="#ff0000" stroke="#ff0000">-44</text><text x="771.4" y="495.1" fill="#ff0000" stroke="#ff0000">-29</text><text x="886.4" y="494.1" fill="#ff0000" stroke="#ff0000">-37</text><text x="855.4" y="501.1" fill="#ff0000" stroke="#ff0000">-37</text><text x="824.4" y="504.1" fill="#ff0000" stroke="#ff0000">-38</text><text x="953.4" y="397.1" fill="#ff0000" stroke="#ff0000">-38</text><text x="929.4" y="415.1" fill="#ff0000" stroke="#ff0000">-46</text><text x="955.4" y="417.1" fill="#ff0000" stroke="#ff0000">-36</text><text x="997.4" y="387.1" fill="#ff0000" stroke="#ff0000">-27</text><text x="987.4" y="485.1" fill="#ff0000" stroke="#ff0000">-18</text><text x="949.4" y="500.1" fill="#ff0000" stroke="#ff0000">-28</text><text x="1009.4" y="498.1" fill="#ff0000" stroke="#ff0000">-12</text><text x="717.4" y="502.1" fill="#ff0000" stroke="#ff0000">-12</text><text x="743.4" y="502.1" fill="#ff0000" stroke="#ff0000">-24</text><text x="793.4" y="509.1" fill="#ff0000" stroke="#ff0000">-43</text><text x="760.4" y="514.1" fill="#ff0000" stroke="#ff0000">-32</text><text x="736.4" y="519.1" fill="#ff0000" stroke="#ff0000">-30</text><text x="694.4" y="533.1" fill="#ff0000" stroke="#ff0000">-13</text><text x="770.4" y="527.1" fill="#ff0000" stroke="#ff0000">-39</text><text x="799.4" y="529.1" fill="#00ffff" stroke="#00ffff">306</text><text x="738.4" y="532.1" fill="#ff0000" stroke="#ff0000">-30</text><text x="723.4" y="543.1" fill="#ff0000" stroke="#ff0000">-24</text><text x="775.4" y="545.1" fill="#ff0000" stroke="#ff0000">-37</text><text x="801.4" y="547.1" fill="#ff0000" stroke="#ff0000">-35</text><text x="680.4" y="552.1" fill="#ff0000" stroke="#ff0000">-16</text><text x="721.4" y="559.1" fill="#ff0000" stroke="#ff0000">-40</text><text x="765.4" y="565.1" fill="#ff0000" stroke="#ff0000">-35</text><text x="790.4" y="570.1" fill="#ff0000" stroke="#ff0000">-29</text><text x="742.4" y="576.1" fill="#ff0000" stroke="#ff0000">-34</text><text x="814.4" y="576.1" fill="#ff0000" stroke="#ff0000">-35</text><text x="774.4" y="582.1" fill="#ff0000" stroke="#ff0000">-31</text><text x="680.4" y="576.1" fill="#ff0000" stroke="#ff0000">-18</text><text x="645.4" y="587.1" fill="#ff0000" stroke="#ff0000">-16</text><text x="672.4" y="589.1" fill="#ff0000" stroke="#ff0000">-26</text><text x="706.4" y="585.1" fill="#ff0000" stroke="#ff0000">-38</text><text x="715.4" y="597.1" fill="#ff0000" stroke="#ff0000">-36</text><text x="754.4" y="602.1" fill="#ff0000" stroke="#ff0000">-28</text><text x="783.4" y="606.1" fill="#ff0000" stroke="#ff0000">-31</text><text x="811.4" y="610.1" fill="#ff0000" stroke="#ff0000">-32</text><text x="652.4" y="608.1" fill="#ff0000" stroke="#ff0000">-14</text><text x="694.4" y="608.1" fill="#ff0000" stroke="#ff0000">-36</text><text x="657.4" y="617.1" fill="#ff0000" stroke="#ff0000">-35</text><text x="696.4" y="618.1" fill="#ff0000" stroke="#ff0000">-32</text><text x="748.4" y="616.1" fill="#ff0000" stroke="#ff0000">-29</text><text x="787.4" y="621.1" fill="#ff0000" stroke="#ff0000">-29</text><text x="821.4" y="516.1" fill="#ff0000" stroke="#ff0000">-37</text><text x="858.4" y="511.1" fill="#ff0000" stroke="#ff0000">-38</text><text x="904.4" y="511.1" fill="#ff0000" stroke="#ff0000">-33</text><text x="942.4" y="517.1" fill="#ff0000" stroke="#ff0000">-28</text><text x="983.4" y="520.1" fill="#ff0000" stroke="#ff0000">-15</text><text x="853.4" y="524.1" fill="#ff0000" stroke="#ff0000">-39</text><text x="882.4" y="525.1" fill="#ff0000" stroke="#ff0000">-33</text><text x="850.4" y="535.1" fill="#ff0000" stroke="#ff0000">-37</text><text x="912.4" y="533.1" fill="#ff0000" stroke="#ff0000">-29</text><text x="947.4" y="533.1" fill="#ff0000" stroke="#ff0000">-21</text><text x="902.4" y="546.1" fill="#ff0000" stroke="#ff0000">-30</text><text x="964.4" y="542.1" fill="#ff0000" stroke="#ff0000">-18</text><text x="1009.4" y="545.1" fill="#ff0000" stroke="#ff0000">-7</text><text x="845.4" y="552.1" fill="#ff0000" stroke="#ff0000">-33</text><text x="870.4" y="552.1" fill="#ff0000" stroke="#ff0000">-35</text><text x="929.4" y="557.1" fill="#ff0000" stroke="#ff0000">-24</text><text x="885.4" y="567.1" fill="#ff0000" stroke="#ff0000">-32</text><text x="855.4" y="571.1" fill="#ff0000" stroke="#ff0000">-33</text><text x="969.4" y="574.1" fill="#ff0000" stroke="#ff0000">-13</text><text x="842.4" y="581.1" fill="#ff0000" stroke="#ff0000">-31</text><text x="901.4" y="579.1" fill="#ff0000" stroke="#ff0000">-26</text><text x="1012.4" y="580.1" fill="#ff0000" stroke="#ff0000">-6</text><text x="822.4" y="592.1" fill="#ff0000" stroke="#ff0000">-26</text><text x="879.4" y="596.1" fill="#ff0000" stroke="#ff0000">-28</text><text x="906.4" y="596.1" fill="#ff0000" stroke="#ff0000">-24</text><text x="935.4" y="589.1" fill="#ff0000" stroke="#ff0000">-17</text><text x="959.4" y="593.1" fill="#ff0000" stroke="#ff0000">-13</text><text x="998.4" y="596.1" fill="#ff0000" stroke="#ff0000">-8</text><text x="835.4" y="611.1" fill="#ff0000" stroke="#ff0000">-33</text><text x="861.4" y="613.1" fill="#ff0000" stroke="#ff0000">-26</text><text x="893.4" y="619.1" fill="#ff0000" stroke="#ff0000">-22</text><text x="921.4" y="618.1" fill="#ff0000" stroke="#ff0000">-17</text><text x="970.4" y="622.1" fill="#ff0000" stroke="#ff0000">-7</text><text x="1010.4" y="617.1" fill="#ff0000" stroke="#ff0000">-6</text><text x="943.4" y="635.1" fill="#ff0000" stroke="#ff0000">-5</text><text x="995.4" y="637.1" fill="#ff0000" stroke="#ff0000">-7</text><text x="961.4" y="647.1" fill="#ff0000" stroke="#ff0000">-7</text><text x="827.4" y="626.1" fill="#ff0000" stroke="#ff0000">-27</text><text x="799.4" y="631.1" fill="#ff0000" stroke="#ff0000">-31</text><text x="854.4" y="629.1" fill="#ff0000" stroke="#ff0000">-28</text><text x="893.4" y="634.1" fill="#ff0000" stroke="#ff0000">-16</text><text x="814.4" y="642.1" fill="#ff0000" stroke="#ff0000">-26</text><text x="847.4" y="642.1" fill="#ff0000" stroke="#ff0000">-25</text><text x="874.4" y="646.1" fill="#ff0000" stroke="#ff0000">-20</text><text x="901.4" y="645.1" fill="#ff0000" stroke="#ff0000">-21</text><text x="827.4" y="652.1" fill="#ff0000" stroke="#ff0000">-24</text><text x="861.4" y="660.1" fill="#ff0000" stroke="#ff0000">-23</text><text x="909.4" y="662.1" fill="#ff0000" stroke="#ff0000">-17</text><text x="959.4" y="662.1" fill="#ff0000" stroke="#ff0000">-9</text><text x="825.4" y="667.1" fill="#ff0000" stroke="#ff0000">-24</text><text x="884.4" y="671.1" fill="#ff0000" stroke="#ff0000">-20</text><text x="943.4" y="677.1" fill="#ff0000" stroke="#ff0000">-9</text><text x="803.4" y="685.1" fill="#ff0000" stroke="#ff0000">-24</text><text x="849.4" y="683.1" fill="#ff0000" stroke="#ff0000">-20</text><text x="895.4" y="682.1" fill="#ff0000" stroke="#ff0000">-19</text><text x="982.4" y="684.1" fill="#ff0000" stroke="#ff0000">-6</text><text x="909.4" y="691.1" fill="#ff0000" stroke="#ff0000">-15</text><text x="878.4" y="695.1" fill="#ff0000" stroke="#ff0000">-21</text><text x="952.4" y="694.1" fill="#ff0000" stroke="#ff0000">-7</text><text x="838.4" y="701.1" fill="#ff0000" stroke="#ff0000">-19</text><text x="866.4" y="705.1" fill="#ff0000" stroke="#ff0000">-19</text><text x="934.4" y="710.1" fill="#ff0000" stroke="#ff0000">-7</text><text x="1011.4" y="691.1" fill="#ff0000" stroke="#ff0000">-3</text><text x="992.4" y="715.1" fill="#ff0000" stroke="#ff0000">-4</text><text x="883.4" y="715.1" fill="#ff0000" stroke="#ff0000">-18</text><text x="803.4" y="721.1" fill="#ff0000" stroke="#ff0000">-19</text><text x="826.4" y="719.1" fill="#ff0000" stroke="#ff0000">-22</text><text x="952.4" y="724.1" fill="#ff0000" stroke="#ff0000">-2</text><text x="863.4" y="724.1" fill="#ff0000" stroke="#ff0000">-20</text><text x="902.4" y="726.1" fill="#ff0000" stroke="#ff0000">-11</text><text x="840.4" y="728.1" fill="#ff0000" stroke="#ff0000">-18</text><text x="939.4" y="734.1" fill="#ff0000" stroke="#ff0000">-3</text><text x="828.4" y="742.1" fill="#ff0000" stroke="#ff0000">-18</text><text x="851.4" y="742.1" fill="#ff0000" stroke="#ff0000">-15</text><text x="892.4" y="740.1" fill="#ff0000" stroke="#ff0000">-13</text><text x="905.4" y="751.1" fill="#ff0000" stroke="#ff0000">-6</text><text x="828.4" y="754.1" fill="#ff0000" stroke="#ff0000">-10</text><text x="878.4" y="768.1" fill="#ff0000" stroke="#ff0000">-2</text><text x="964.4" y="761.1" fill="#ff0000" stroke="#ff0000">-2</text><text x="965.4" y="746.1" fill="#00ff00" stroke="#00ff00">0</text><text x="1001.4" y="725.1" fill="#00b0b0" stroke="#00b0b0">1</text><text x="1011.4" y="744.1" fill="#00b0b0" stroke="#00b0b0">4</text><text x="1013.4" y="763.1" fill="#00b0b0" stroke="#00b0b0">2</text><text x="921.4" y="763.1" fill="#00b0b0" stroke="#00b0b0">1</text><text x="654.4" y="629.1" fill="#ff0000" stroke="#ff0000">-32</text><text x="680.4" y="635.1" fill="#ff0000" stroke="#ff0000">-30</text><text x="710.4" y="632.1" fill="#ff0000" stroke="#ff0000">-26</text><text x="737.4" y="635.1" fill="#ff0000" stroke="#ff0000">-28</text><text x="772.4" y="641.1" fill="#ff0000" stroke="#ff0000">-30</text><text x="641.4" y="642.1" fill="#ff0000" stroke="#ff0000">-30</text><text x="672.4" y="645.1" fill="#ff0000" stroke="#ff0000">-26</text><text x="707.4" y="646.1" fill="#ff0000" stroke="#ff0000">-24</text><text x="729.4" y="650.1" fill="#ff0000" stroke="#ff0000">-22</text><text x="778.4" y="655.1" fill="#ff0000" stroke="#ff0000">-26</text><text x="641.4" y="656.1" fill="#ff0000" stroke="#ff0000">-29</text><text x="694.4" y="661.1" fill="#ff0000" stroke="#ff0000">-21</text><text x="733.4" y="670.1" fill="#ff0000" stroke="#ff0000">-23</text><text x="771.4" y="675.1" fill="#ff0000" stroke="#ff0000">-27</text><text x="643.4" y="668.1" fill="#ff0000" stroke="#ff0000">-24</text><text x="678.4" y="670.1" fill="#ff0000" stroke="#ff0000">-20</text><text x="759.4" y="685.1" fill="#ff0000" stroke="#ff0000">-24</text><text x="662.4" y="687.1" fill="#ff0000" stroke="#ff0000">-19</text><text x="735.4" y="691.1" fill="#ff0000" stroke="#ff0000">-24</text><text x="711.4" y="695.1" fill="#ff0000" stroke="#ff0000">-22</text><text x="777.4" y="699.1" fill="#ff0000" stroke="#ff0000">-23</text><text x="713.4" y="709.1" fill="#ff0000" stroke="#ff0000">-18</text><text x="786.4" y="709.1" fill="#ff0000" stroke="#ff0000">-22</text><text x="683.4" y="712.1" fill="#ff0000" stroke="#ff0000">-15</text><text x="662.4" y="722.1" fill="#ff0000" stroke="#ff0000">-15</text><text x="752.4" y="721.1" fill="#ff0000" stroke="#ff0000">-18</text><text x="718.4" y="727.1" fill="#ff0000" stroke="#ff0000">-12</text><text x="780.4" y="727.1" fill="#ff0000" stroke="#ff0000">-17</text><text x="654.4" y="742.1" fill="#ff0000" stroke="#ff0000">-5</text><text x="696.4" y="740.1" fill="#ff0000" stroke="#ff0000">-9</text><text x="718.4" y="741.1" fill="#ff0000" stroke="#ff0000">-12</text><text x="742.4" y="737.1" fill="#ff0000" stroke="#ff0000">-17</text><text x="771.4" y="745.1" fill="#ff0000" stroke="#ff0000">-16</text><text x="751.4" y="750.1" fill="#ff0000" stroke="#ff0000">-13</text><text x="690.4" y="761.1" fill="#ff0000" stroke="#ff0000">-2</text><text x="752.4" y="761.1" fill="#ff0000" stroke="#ff0000">-14</text><text x="787.4" y="760.1" fill="#ff0000" stroke="#ff0000">-15</text><text x="728.4" y="765.1" fill="#ff0000" stroke="#ff0000">-10</text><text x="643.4" y="769.1" fill="#ff0000" stroke="#ff0000">-1</text><text x="602.4" y="612.1" fill="#ff0000" stroke="#ff0000">-4</text><text x="577.4" y="629.1" fill="#ff0000" stroke="#ff0000">-6</text><text x="622.4" y="623.1" fill="#ff0000" stroke="#ff0000">-12</text><text x="608.4" y="635.1" fill="#ff0000" stroke="#ff0000">-7</text><text x="593.4" y="665.1" fill="#ff0000" stroke="#ff0000">-21</text><text x="524.4" y="673.1" fill="#ff0000" stroke="#ff0000">-9</text><text x="508.4" y="683.1" fill="#ff0000" stroke="#ff0000">-8</text><text x="569.4" y="679.1" fill="#ff0000" stroke="#ff0000">-17</text><text x="595.4" y="684.1" fill="#ff0000" stroke="#ff0000">-18</text><text x="556.4" y="692.1" fill="#ff0000" stroke="#ff0000">-10</text><text x="596.4" y="698.1" fill="#ff0000" stroke="#ff0000">-14</text><text x="630.4" y="698.1" fill="#ff0000" stroke="#ff0000">-12</text><text x="620.4" y="709.1" fill="#ff0000" stroke="#ff0000">-8</text><text x="572.4" y="718.1" fill="#ff0000" stroke="#ff0000">-5</text><text x="602.4" y="718.1" fill="#ff0000" stroke="#ff0000">-11</text><text x="532.4" y="733.1" fill="#00b0b0" stroke="#00b0b0">3</text><text x="552.4" y="735.1" fill="#ff0000" stroke="#ff0000">-4</text><text x="574.4" y="737.1" fill="#ff0000" stroke="#ff0000">-5</text><text x="603.4" y="731.1" fill="#ff0000" stroke="#ff0000">-7</text><text x="558.4" y="753.1" fill="#00b0b0" stroke="#00b0b0">2</text><text x="586.4" y="754.1" fill="#ff0000" stroke="#ff0000">-2</text><text x="610.4" y="759.1" fill="#ff0000" stroke="#ff0000">-5</text><text x="521.4" y="759.1" fill="#00b0b0" stroke="#00b0b0">9</text><text x="488.4" y="705.1" fill="#ff0000" stroke="#ff0000">-1</text><text x="452.4" y="718.1" fill="#00b0b0" stroke="#00b0b0">5</text><text x="505.4" y="716.1" fill="#00b0b0" stroke="#00b0b0">1</text><text x="468.4" y="741.1" fill="#00b0b0" stroke="#00b0b0">6</text><text x="490.4" y="743.1" fill="#00b0b0" stroke="#00b0b0">10</text><text x="496.4" y="759.1" fill="#00b0b0" stroke="#00b0b0">9</text><text x="1010.4" y="15.1" fill="#ff0000" stroke="#ff0000">-16</text></g>
<g fill="none" stroke-width="1.8" stroke-linecap="butt"><path d="M53.5,45.2L61.5,38.2" stroke="#00ffff"/><path d="M87.5,50.2L95.5,43.2" stroke="#00ffff"/><path d="M154.5,50.7L158.0,54.2L164.5,47.7" stroke="#00ffff"/><path d="M107.5,74.2L115.5,67.2" stroke="#00ffff"/><path d="M227.5,26.2L235.5,19.2" stroke="#00ffff"/><path d="M438.5,131.2L446.5,124.2" stroke="#00ffff"/><path d="M428.5,146.2L436.5,139.2" stroke="#00ffff"/><path d="M430.5,177.2L438.5,170.2" stroke="#00ffff"/><path d="M743.5,98.7L747.0,102.2L753.5,95.7" stroke="#00ffff"/><path d="M726.5,114.7L730.0,118.2L736.5,111.7" stroke="#00ffff"/><path d="M714.5,125.7L718.0,129.2L724.5,122.7" stroke="#00ffff"/><path d="M707.5,140.7L711.0,144.2L717.5,137.7" stroke="#00ffff"/><path d="M701.5,164.7L705.0,168.2L711.5,161.7" stroke="#00ffff"/><path d="M642.5,186.2L650.5,179.2" stroke="#00ffff"/><path d="M762.5,127.2L770.5,134.2" stroke="#ff0000"/><path d="M741.5,145.2L748.0,151.7L751.5,148.2" stroke="#ff0000"/><path d="M778.5,144.2L785.0,150.2L788.5,150.2" stroke="#ff0000"/><path d="M726.5,166.2L733.0,172.2L736.5,172.2" stroke="#ff0000"/><path d="M782.5,161.2L790.5,168.2" stroke="#ff0000"/><path d="M829.5,17.7L833.0,21.2L839.5,14.7" stroke="#00ffff"/><path d="M805.5,29.7L809.0,33.2L815.5,26.7" stroke="#00ffff"/><path d="M789.5,47.7L793.0,51.2L799.5,44.7" stroke="#00ffff"/><path d="M808.5,54.7L812.0,58.2L818.5,51.7" stroke="#00ffff"/><path d="M828.5,69.7L832.0,73.2L838.5,66.7" stroke="#00ffff"/><path d="M777.5,64.7L781.0,68.2L787.5,61.7" stroke="#00ffff"/><path d="M778.5,100.7L782.0,104.2L788.5,97.7" stroke="#00ffff"/><path d="M928.5,9.2L936.5,16.2" stroke="#ff0000"/><path d="M992.5,4.2L1000.5,11.2" stroke="#ff0000"/><path d="M1003.5,26.2L1011.5,33.2" stroke="#ff0000"/><path d="M863.5,46.2L871.5,53.2" stroke="#ff0000"/><path d="M956.5,47.2L964.5,54.2" stroke="#ff0000"/><path d="M992.5,51.2L1000.5,58.2" stroke="#ff0000"/><path d="M873.5,72.2L881.5,79.2" stroke="#ff0000"/><path d="M936.5,78.2L943.0,84.2L946.5,84.2" stroke="#ff0000"/><path d="M975.5,81.2L982.0,87.2L985.5,87.2" stroke="#ff0000"/><path d="M822.5,114.2L826.0,110.7L832.5,117.2" stroke="#ff0000"/><path d="M862.5,114.2L866.0,110.7L872.5,117.2" stroke="#ff0000"/><path d="M893.5,120.2L897.0,116.7L903.5,123.2" stroke="#ff0000"/><path d="M928.5,119.2L932.0,115.7L938.5,122.2" stroke="#ff0000"/><path d="M1006.5,114.2L1013.0,120.2L1016.5,120.2" stroke="#ff0000"/><path d="M848.5,131.2L852.0,127.7L858.5,134.2" stroke="#ff0000"/><path d="M813.5,134.2L820.0,140.7L823.5,137.2" stroke="#ff0000"/><path d="M878.5,149.2L882.0,145.7L888.5,152.2" stroke="#ff0000"/><path d="M928.5,143.2L932.0,139.7L938.5,146.2" stroke="#ff0000"/><path d="M985.5,149.2L993.5,156.2" stroke="#ff0000"/><path d="M948.5,157.2L956.5,164.2" stroke="#ff0000"/><path d="M1008.5,159.2L1012.0,155.7L1018.5,162.2" stroke="#ff0000"/><path d="M858.5,174.2L862.0,170.7L868.5,177.2" stroke="#ff0000"/><path d="M883.5,179.2L887.0,175.7L893.5,182.2" stroke="#ff0000"/><path d="M925.5,181.2L929.0,177.7L935.5,184.2" stroke="#ff0000"/><path d="M965.5,175.2L969.0,171.7L975.5,178.2" stroke="#ff0000"/><path d="M998.5,176.2L1006.5,183.2" stroke="#ff0000"/><path d="M841.5,189.2L845.0,185.7L851.5,192.2" stroke="#ff0000"/><path d="M568.5,209.2L576.5,202.2" stroke="#00ffff"/><path d="M560.5,239.2L568.5,232.2" stroke="#00ffff"/><path d="M549.5,267.2L555.5,261.2L559.5,261.2" stroke="#00ffff"/><path d="M538.5,350.2L546.5,343.2" stroke="#00ffff"/><path d="M536.5,371.2L542.5,365.2L546.5,365.2" stroke="#00ffff"/><path d="M694.5,204.7L698.0,208.2L704.5,201.7" stroke="#00ffff"/><path d="M751.5,182.2L758.0,188.2L761.5,188.2" stroke="#ff0000"/><path d="M772.5,209.2L779.0,215.2L782.5,215.2" stroke="#ff0000"/><path d="M741.5,220.2L748.0,226.2L751.5,226.2" stroke="#ff0000"/><path d="M713.5,242.2L720.0,248.7L723.5,245.2" stroke="#ff0000"/><path d="M768.5,249.2L775.0,255.2L778.5,255.2" stroke="#ff0000"/><path d="M742.5,252.2L749.0,258.2L752.5,258.2" stroke="#ff0000"/><path d="M703.5,271.2L710.0,277.7L713.5,274.2" stroke="#ff0000"/><path d="M727.5,290.2L734.0,296.2L737.5,296.2" stroke="#ff0000"/><path d="M726.5,301.2L733.0,307.2L736.5,307.2" stroke="#ff0000"/><path d="M778.5,299.2L785.0,305.2L788.5,305.2" stroke="#ff0000"/><path d="M748.5,324.2L755.0,330.2L758.5,330.2" stroke="#ff0000"/><path d="M784.5,330.2L788.0,326.7L794.5,333.2" stroke="#ff0000"/><path d="M812.5,191.2L819.0,197.2L822.5,197.2" stroke="#ff0000"/><path d="M809.5,211.2L816.0,217.2L819.5,217.2" stroke="#ff0000"/><path d="M937.5,195.2L941.0,191.7L947.5,198.2" stroke="#ff0000"/><path d="M917.5,208.2L921.0,204.7L927.5,211.2" stroke="#ff0000"/><path d="M878.5,213.2L882.0,209.7L888.5,216.2" stroke="#ff0000"/><path d="M960.5,221.2L964.0,217.7L970.5,224.2" stroke="#ff0000"/><path d="M1018.5,231.2L1022.0,227.7L1028.5,234.2" stroke="#ff0000"/><path d="M855.5,233.2L859.0,229.7L865.5,236.2" stroke="#ff0000"/><path d="M920.5,235.2L924.0,231.7L930.5,238.2" stroke="#ff0000"/><path d="M847.5,240.2L855.5,247.2" stroke="#ff0000"/><path d="M1010.5,249.2L1014.0,245.7L1020.5,252.2" stroke="#ff0000"/><path d="M892.5,258.2L896.0,254.7L902.5,261.2" stroke="#ff0000"/><path d="M821.5,255.2L828.0,261.2L831.5,261.2" stroke="#ff0000"/><path d="M811.5,271.2L815.0,267.7L821.5,274.2" stroke="#ff0000"/><path d="M912.5,267.2L919.0,273.2L922.5,273.2" stroke="#ff0000"/><path d="M1017.5,271.2L1021.0,267.7L1027.5,274.2" stroke="#ff0000"/><path d="M848.5,277.2L856.5,284.2" stroke="#ff0000"/><path d="M878.5,279.2L882.0,275.7L888.5,282.2" stroke="#ff0000"/><path d="M950.5,278.2L954.0,274.7L960.5,281.2" stroke="#ff0000"/><path d="M795.5,282.2L803.5,289.2" stroke="#ff0000"/><path d="M981.5,286.2L985.0,282.7L991.5,289.2" stroke="#ff0000"/><path d="M854.5,287.2L861.0,293.2L864.5,293.2" stroke="#ff0000"/><path d="M819.5,290.2L826.0,296.2L829.5,296.2" stroke="#ff0000"/><path d="M934.5,294.2L938.0,290.7L944.5,297.2" stroke="#ff0000"/><path d="M1016.5,299.2L1020.0,295.7L1026.5,302.2" stroke="#ff0000"/><path d="M810.5,305.2L814.0,301.7L820.5,308.2" stroke="#ff0000"/><path d="M975.5,308.2L979.0,304.7L985.5,311.2" stroke="#ff0000"/><path d="M801.5,316.2L805.0,312.7L811.5,319.2" stroke="#ff0000"/><path d="M996.5,323.2L1000.0,319.7L1006.5,326.2" stroke="#ff0000"/><path d="M902.5,320.2L906.0,316.7L912.5,323.2" stroke="#ff0000"/><path d="M969.5,338.2L973.0,334.7L979.5,341.2" stroke="#ff0000"/><path d="M926.5,341.2L934.5,348.2" stroke="#ff0000"/><path d="M868.5,346.2L875.0,352.2L878.5,352.2" stroke="#ff0000"/><path d="M928.5,365.2L932.0,361.7L938.5,368.2" stroke="#ff0000"/><path d="M968.5,361.2L972.0,357.7L978.5,364.2" stroke="#ff0000"/><path d="M998.5,362.2L1002.0,358.7L1008.5,365.2" stroke="#ff0000"/><path d="M451.5,286.2L459.5,279.2" stroke="#00ffff"/><path d="M520.5,290.7L524.0,294.2L530.5,287.7" stroke="#00ffff"/><path d="M515.5,317.2L521.5,311.2L525.5,311.2" stroke="#00ffff"/><path d="M483.5,324.2L491.5,317.2" stroke="#00ffff"/><path d="M439.5,323.7L443.0,327.2L449.5,320.7" stroke="#00ffff"/><path d="M454.5,343.2L462.5,336.2" stroke="#00ffff"/><path d="M494.5,345.2L502.5,338.2" stroke="#00ffff"/><path d="M414.5,362.7L418.0,366.2L424.5,359.7" stroke="#00ffff"/><path d="M451.5,366.7L455.0,370.2L461.5,363.7" stroke="#00ffff"/><path d="M497.5,372.2L505.5,365.2" stroke="#00ffff"/><path d="M477.5,387.2L485.5,380.2" stroke="#00ffff"/><path d="M534.5,388.2L542.5,381.2" stroke="#00ffff"/><path d="M426.5,399.7L430.0,403.2L436.5,396.7" stroke="#00ffff"/><path d="M469.5,407.2L477.5,400.2" stroke="#00ffff"/><path d="M520.5,408.2L528.5,401.2" stroke="#00ffff"/><path d="M480.5,428.2L488.5,421.2" stroke="#00ffff"/><path d="M509.5,427.2L515.5,421.2L519.5,421.2" stroke="#00ffff"/><path d="M440.5,437.2L446.5,431.2L450.5,431.2" stroke="#00ffff"/><path d="M532.5,437.2L540.5,430.2" stroke="#00ffff"/><path d="M499.5,440.2L507.5,433.2" stroke="#00ffff"/><path d="M453.5,448.2L459.5,442.2L463.5,442.2" stroke="#00ffff"/><path d="M414.5,451.2L422.5,444.2" stroke="#00ffff"/><path d="M512.5,453.2L520.5,446.2" stroke="#00ffff"/><path d="M551.5,444.7L555.0,448.2L561.5,441.7" stroke="#00ffff"/><path d="M423.5,459.7L427.0,463.2L433.5,456.7" stroke="#00ffff"/><path d="M544.5,465.2L552.5,458.2" stroke="#00ffff"/><path d="M519.5,469.2L527.5,462.2" stroke="#00ffff"/><path d="M493.5,475.2L501.5,468.2" stroke="#00ffff"/><path d="M408.5,478.2L414.5,472.2L418.5,472.2" stroke="#00ffff"/><path d="M503.5,486.2L511.5,479.2" stroke="#00ffff"/><path d="M531.5,484.2L539.5,477.2" stroke="#00ffff"/><path d="M568.5,481.7L572.0,485.2L578.5,478.7" stroke="#00ffff"/><path d="M407.5,490.2L415.5,483.2" stroke="#00ffff"/><path d="M434.5,497.2L442.5,490.2" stroke="#00ffff"/><path d="M552.5,494.2L560.5,487.2" stroke="#00ffff"/><path d="M479.5,499.7L483.0,503.2L489.5,496.7" stroke="#00ffff"/><path d="M511.5,502.2L519.5,495.2" stroke="#00ffff"/><path d="M560.5,510.7L564.0,514.2L570.5,507.7" stroke="#00ffff"/><path d="M413.5,525.2L421.5,518.2" stroke="#00ffff"/><path d="M516.5,523.7L520.0,527.2L526.5,520.7" stroke="#00ffff"/><path d="M585.5,499.7L589.0,503.2L595.5,496.7" stroke="#00ffff"/><path d="M351.5,497.2L357.5,491.2L361.5,491.2" stroke="#00ffff"/><path d="M375.5,518.2L383.5,511.2" stroke="#00ffff"/><path d="M436.5,531.7L440.0,535.2L446.5,528.7" stroke="#00ffff"/><path d="M401.5,543.2L409.5,536.2" stroke="#00ffff"/><path d="M377.5,558.2L385.5,551.2" stroke="#00ffff"/><path d="M416.5,559.2L424.5,552.2" stroke="#00ffff"/><path d="M438.5,576.2L446.5,569.2" stroke="#00ffff"/><path d="M345.5,588.2L353.5,581.2" stroke="#00ffff"/><path d="M388.5,587.7L392.0,591.2L398.5,584.7" stroke="#00ffff"/><path d="M591.5,523.7L595.0,527.2L601.5,520.7" stroke="#00ffff"/><path d="M495.5,542.2L503.5,535.2" stroke="#00ffff"/><path d="M559.5,543.2L562.5,546.2L565.5,542.2" stroke="#00ffff"/><path d="M584.5,543.2L592.5,536.2" stroke="#00ffff"/><path d="M476.5,555.2L484.5,548.2" stroke="#00ffff"/><path d="M506.5,556.2L514.5,549.2" stroke="#00ffff"/><path d="M572.5,556.2L578.5,550.2L582.5,550.2" stroke="#00ffff"/><path d="M602.5,556.7L606.0,560.2L612.5,553.7" stroke="#00ffff"/><path d="M615.5,548.2L623.5,541.2" stroke="#00ffff"/><path d="M549.5,563.7L553.0,567.2L559.5,560.7" stroke="#00ffff"/><path d="M481.5,576.7L485.0,580.2L491.5,573.7" stroke="#00ffff"/><path d="M540.5,580.2L548.5,573.2" stroke="#00ffff"/><path d="M576.5,577.2L584.5,570.2" stroke="#00ffff"/><path d="M612.5,577.7L616.0,581.2L622.5,574.7" stroke="#00ffff"/><path d="M485.5,592.7L489.0,596.2L495.5,589.7" stroke="#00ffff"/><path d="M550.5,595.2L558.5,588.2" stroke="#00ffff"/><path d="M527.5,606.2L535.5,599.2" stroke="#00ffff"/><path d="M587.5,601.7L591.0,605.2L597.5,598.7" stroke="#00ffff"/><path d="M566.5,611.7L570.0,615.2L576.5,608.7" stroke="#00ffff"/><path d="M490.5,620.2L496.5,614.2L500.5,614.2" stroke="#00ffff"/><path d="M526.5,619.7L530.0,623.2L536.5,616.7" stroke="#00ffff"/><path d="M553.5,627.7L557.0,631.2L563.5,624.7" stroke="#00ffff"/><path d="M531.5,636.7L535.0,640.2L541.5,633.7" stroke="#00ffff"/><path d="M470.5,641.7L474.0,645.2L480.5,638.7" stroke="#00ffff"/><path d="M464.5,658.2L472.5,651.2" stroke="#00ffff"/><path d="M439.5,664.2L447.5,657.2" stroke="#00ffff"/><path d="M664.5,401.2L672.5,394.2" stroke="#00ffff"/><path d="M700.5,472.2L706.5,466.2L710.5,466.2" stroke="#00ffff"/><path d="M665.5,534.7L669.0,538.2L675.5,531.7" stroke="#00ffff"/><path d="M827.5,370.2L835.5,377.2" stroke="#ff0000"/><path d="M902.5,380.2L906.0,376.7L912.5,383.2" stroke="#ff0000"/><path d="M944.5,385.2L948.0,381.7L954.5,388.2" stroke="#ff0000"/><path d="M788.5,387.2L796.5,394.2" stroke="#ff0000"/><path d="M866.5,386.2L874.5,393.2" stroke="#ff0000"/><path d="M832.5,393.2L840.5,400.2" stroke="#ff0000"/><path d="M833.5,408.2L841.5,415.2" stroke="#ff0000"/><path d="M786.5,417.2L794.5,424.2" stroke="#ff0000"/><path d="M860.5,416.2L868.5,423.2" stroke="#ff0000"/><path d="M850.5,427.2L858.5,434.2" stroke="#ff0000"/><path d="M895.5,420.2L899.0,416.7L905.5,423.2" stroke="#ff0000"/><path d="M803.5,428.2L811.5,435.2" stroke="#ff0000"/><path d="M783.5,436.2L791.5,443.2" stroke="#ff0000"/><path d="M893.5,433.2L901.5,440.2" stroke="#ff0000"/><path d="M838.5,439.2L846.5,446.2" stroke="#ff0000"/><path d="M896.5,447.2L900.0,443.7L906.5,450.2" stroke="#ff0000"/><path d="M943.5,446.2L951.5,453.2" stroke="#ff0000"/><path d="M942.5,456.2L950.5,463.2" stroke="#ff0000"/><path d="M857.5,452.2L865.5,459.2" stroke="#ff0000"/><path d="M792.5,458.2L799.0,464.2L802.5,464.2" stroke="#ff0000"/><path d="M818.5,466.2L826.5,473.2" stroke="#ff0000"/><path d="M861.5,466.2L869.5,473.2" stroke="#ff0000"/><path d="M911.5,476.2L915.0,472.7L921.5,479.2" stroke="#ff0000"/><path d="M855.5,482.2L859.0,478.7L865.5,485.2" stroke="#ff0000"/><path d="M797.5,486.2L804.0,492.7L807.5,489.2" stroke="#ff0000"/><path d="M912.5,490.2L916.0,486.7L922.5,493.2" stroke="#ff0000"/><path d="M879.5,496.2L883.0,492.7L889.5,499.2" stroke="#ff0000"/><path d="M851.5,500.2L855.0,496.7L861.5,503.2" stroke="#ff0000"/><path d="M979.5,392.2L983.0,388.7L989.5,395.2" stroke="#ff0000"/><path d="M955.5,410.2L959.0,406.7L965.5,413.2" stroke="#ff0000"/><path d="M982.5,412.2L986.0,408.7L992.5,415.2" stroke="#ff0000"/><path d="M1013.5,476.2L1020.0,482.7L1023.5,479.2" stroke="#ff0000"/><path d="M975.5,491.2L983.5,498.2" stroke="#ff0000"/><path d="M819.5,504.2L823.0,500.7L829.5,507.2" stroke="#ff0000"/><path d="M786.5,504.2L794.5,511.2" stroke="#ff0000"/><path d="M728,518L736,525" stroke="#ff0000"/><path d="M721.5,524.2L728.0,530.7L731.5,527.2" stroke="#ff0000"/><path d="M796.5,518.2L804.5,525.2" stroke="#ff0000"/><path d="M829.5,527.2L837.5,520.2" stroke="#00ffff"/><path d="M765.5,524.2L772.0,530.2L775.5,530.2" stroke="#ff0000"/><path d="M750.5,535.2L757.0,541.7L760.5,538.2" stroke="#ff0000"/><path d="M802.5,541.2L806.0,537.7L812.5,544.2" stroke="#ff0000"/><path d="M826.5,544.2L830.0,540.7L836.5,547.2" stroke="#ff0000"/><path d="M707.5,543.2L714.0,549.7L717.5,546.2" stroke="#ff0000"/><path d="M748.5,550.2L755.0,556.2L758.5,556.2" stroke="#ff0000"/><path d="M791.5,560.2L795.0,556.7L801.5,563.2" stroke="#ff0000"/><path d="M816.5,561.2L824.5,568.2" stroke="#ff0000"/><path d="M768.5,567.2L776.5,574.2" stroke="#ff0000"/><path d="M840.5,567.2L847.0,573.2L850.5,573.2" stroke="#ff0000"/><path d="M801.5,578.2L805.0,574.7L811.5,581.2" stroke="#ff0000"/><path d="M707.5,568.2L714.0,574.7L717.5,571.2" stroke="#ff0000"/><path d="M698.5,580.2L706.5,587.2" stroke="#ff0000"/><path d="M733.5,580.2L737.0,576.7L743.5,583.2" stroke="#ff0000"/><path d="M741.5,589.2L749.5,596.2" stroke="#ff0000"/><path d="M678.5,599.2L685.0,605.7L688.5,602.2" stroke="#ff0000"/><path d="M722.5,604.2L726.0,600.7L732.5,607.2" stroke="#ff0000"/><path d="M683.5,609.2L691.5,616.2" stroke="#ff0000"/><path d="M722.5,614.2L726.0,610.7L732.5,617.2" stroke="#ff0000"/><path d="M774.5,611.2L778.0,607.7L784.5,614.2" stroke="#ff0000"/><path d="M813.5,612.2L821.5,619.2" stroke="#ff0000"/><path d="M846.5,511.2L850.0,507.7L856.5,514.2" stroke="#ff0000"/><path d="M884.5,502.2L892.5,509.2" stroke="#ff0000"/><path d="M930.5,507.2L934.0,503.7L940.5,510.2" stroke="#ff0000"/><path d="M968.5,508.2L976.5,515.2" stroke="#ff0000"/><path d="M1009.5,511.2L1017.5,518.2" stroke="#ff0000"/><path d="M880.5,521.2L884.0,517.7L890.5,524.2" stroke="#ff0000"/><path d="M908.5,514.2L915.0,520.7L918.5,517.2" stroke="#ff0000"/><path d="M876.5,527.2L884.5,534.2" stroke="#ff0000"/><path d="M939.5,528.2L943.0,524.7L949.5,531.2" stroke="#ff0000"/><path d="M974.5,524.2L982.5,531.2" stroke="#ff0000"/><path d="M924.5,538.2L932.5,545.2" stroke="#ff0000"/><path d="M990.5,538.2L994.0,534.7L1000.5,541.2" stroke="#ff0000"/><path d="M897.5,543.2L904.0,549.2L907.5,549.2" stroke="#ff0000"/><path d="M955.5,553.2L959.0,549.7L965.5,556.2" stroke="#ff0000"/><path d="M912.5,562.2L916.0,558.7L922.5,565.2" stroke="#ff0000"/><path d="M882.5,562.2L889.0,568.2L892.5,568.2" stroke="#ff0000"/><path d="M995.5,565.2L1003.5,572.2" stroke="#ff0000"/><path d="M868.5,577.2L872.0,573.7L878.5,580.2" stroke="#ff0000"/><path d="M927.5,574.2L931.0,570.7L937.5,577.2" stroke="#ff0000"/><path d="M848.5,588.2L852.0,584.7L858.5,591.2" stroke="#ff0000"/><path d="M905.5,590.2L909.0,586.7L915.5,593.2" stroke="#ff0000"/><path d="M932.5,590.2L936.0,586.7L942.5,593.2" stroke="#ff0000"/><path d="M961.5,585.2L965.0,581.7L971.5,588.2" stroke="#ff0000"/><path d="M985.5,585.2L993.5,592.2" stroke="#ff0000"/><path d="M1014.5,587.2L1022.5,594.2" stroke="#ff0000"/><path d="M861.5,606.2L865.0,602.7L871.5,609.2" stroke="#ff0000"/><path d="M887.5,604.2L894.0,610.2L897.5,610.2" stroke="#ff0000"/><path d="M947.5,614.2L951.0,610.7L957.5,617.2" stroke="#ff0000"/><path d="M986.5,613.2L994.5,620.2" stroke="#ff0000"/><path d="M959.5,626.2L966.0,632.2L969.5,632.2" stroke="#ff0000"/><path d="M1011.5,628.2L1019.5,635.2" stroke="#ff0000"/><path d="M979.5,638.2L987.5,645.2" stroke="#ff0000"/><path d="M823.5,626.2L827.0,622.7L833.5,629.2" stroke="#ff0000"/><path d="M881.5,621.2L889.5,628.2" stroke="#ff0000"/><path d="M919.5,626.2L926.0,632.2L929.5,632.2" stroke="#ff0000"/><path d="M839.5,637.2L843.0,633.7L849.5,640.2" stroke="#ff0000"/><path d="M873.5,633.2L881.5,640.2" stroke="#ff0000"/><path d="M928.5,636.2L936.5,643.2" stroke="#ff0000"/><path d="M853.5,648.2L857.0,644.7L863.5,651.2" stroke="#ff0000"/><path d="M887.5,651.2L895.5,658.2" stroke="#ff0000"/><path d="M936.5,658.2L940.0,654.7L946.5,661.2" stroke="#ff0000"/><path d="M976.5,653.2L984.5,660.2" stroke="#ff0000"/><path d="M851.5,658.2L859.5,665.2" stroke="#ff0000"/><path d="M911.5,662.2L919.5,669.2" stroke="#ff0000"/><path d="M960.5,669.2L968.5,676.2" stroke="#ff0000"/><path d="M830.5,676.2L838.5,683.2" stroke="#ff0000"/><path d="M921.5,673.2L929.5,680.2" stroke="#ff0000"/><path d="M998.5,675.2L1006.5,682.2" stroke="#ff0000"/><path d="M932.5,682.2L940.5,689.2" stroke="#ff0000"/><path d="M968.5,686.2L976.5,693.2" stroke="#ff0000"/><path d="M865.5,692.2L873.5,699.2" stroke="#ff0000"/><path d="M892.5,697.2L900.5,704.2" stroke="#ff0000"/><path d="M951.5,705.2L955.0,701.7L961.5,708.2" stroke="#ff0000"/><path d="M1008.5,704.2L1016.5,711.2" stroke="#ff0000"/><path d="M910.5,706.2L918.5,713.2" stroke="#ff0000"/><path d="M852.5,711.2L859.0,717.2L862.5,717.2" stroke="#ff0000"/><path d="M968.5,715.2L976.5,722.2" stroke="#ff0000"/><path d="M890.5,716.2L897.0,722.2L900.5,722.2" stroke="#ff0000"/><path d="M929.5,717.2L937.5,724.2" stroke="#ff0000"/><path d="M955.5,725.2L963.5,732.2" stroke="#ff0000"/><path d="M918.5,732.2L925.0,738.2L928.5,738.2" stroke="#ff0000"/><path d="M921.5,742.2L928.0,748.2L931.5,748.2" stroke="#ff0000"/><path d="M855.5,746.2L862.0,752.2L865.5,752.2" stroke="#ff0000"/><path d="M893.5,759.2L901.5,766.2" stroke="#ff0000"/><path d="M980.5,752.2L987.0,758.7L990.5,755.2" stroke="#ff0000"/><path d="M975.5,740.2L983.5,740.2" stroke="#00ff00"/><path d="M1011.5,720.2L1015.0,716.7L1021.5,723.2" stroke="#00ffff"/><path d="M1021.5,742.2L1029.5,735.2" stroke="#00ffff"/><path d="M930.5,760.2L938.5,753.2" stroke="#00ffff"/><path d="M680.5,619.2L688.5,626.2" stroke="#ff0000"/><path d="M707.5,625.2L715.5,632.2" stroke="#ff0000"/><path d="M763.5,626.2L770.0,632.2L773.5,632.2" stroke="#ff0000"/><path d="M800.5,634.2L808.5,641.2" stroke="#ff0000"/><path d="M666.5,637.2L670.0,633.7L676.5,640.2" stroke="#ff0000"/><path d="M699.5,636.2L707.5,643.2" stroke="#ff0000"/><path d="M734.5,636.2L742.5,643.2" stroke="#ff0000"/><path d="M756.5,641.2L764.5,648.2" stroke="#ff0000"/><path d="M805.5,646.2L812.0,652.2L815.5,652.2" stroke="#ff0000"/><path d="M667.5,645.2L674.0,651.2L677.5,651.2" stroke="#ff0000"/><path d="M721.5,656.2L725.0,652.7L731.5,659.2" stroke="#ff0000"/><path d="M760.5,662.2L767.0,668.2L770.5,668.2" stroke="#ff0000"/><path d="M797.5,665.2L804.0,671.2L807.5,671.2" stroke="#ff0000"/><path d="M670.5,664.2L674.0,660.7L680.5,667.2" stroke="#ff0000"/><path d="M786.5,676.2L793.0,682.2L796.5,682.2" stroke="#ff0000"/><path d="M688.5,679.2L696.5,686.2" stroke="#ff0000"/><path d="M803.5,691.2L811.5,698.2" stroke="#ff0000"/><path d="M741.5,700.2L748.0,706.2L751.5,706.2" stroke="#ff0000"/><path d="M813.5,701.2L820.0,707.2L823.5,707.2" stroke="#ff0000"/><path d="M688.5,714.2L695.0,720.2L698.5,720.2" stroke="#ff0000"/><path d="M778.5,717.2L782.0,713.7L788.5,720.2" stroke="#ff0000"/><path d="M745.5,719.2L753.5,726.2" stroke="#ff0000"/><path d="M671.5,733.2L678.0,739.2L681.5,739.2" stroke="#ff0000"/><path d="M712.5,731.2L720.5,738.2" stroke="#ff0000"/><path d="M768.5,729.2L776.5,736.2" stroke="#ff0000"/><path d="M793.5,736.2L801.5,743.2" stroke="#ff0000"/><path d="M706.5,752.2L713.0,758.7L716.5,755.2" stroke="#ff0000"/><path d="M777.5,752.2L785.5,759.2" stroke="#ff0000"/><path d="M660.5,760.2L668.5,767.2" stroke="#ff0000"/><path d="M618.5,603.2L625.0,609.7L628.5,606.2" stroke="#ff0000"/><path d="M593.5,620.2L600.0,626.7L603.5,623.2" stroke="#ff0000"/><path d="M648.5,614.2L656.5,621.2" stroke="#ff0000"/><path d="M624.5,626.2L631.0,632.7L634.5,629.2" stroke="#ff0000"/><path d="M619.5,656.2L627.5,663.2" stroke="#ff0000"/><path d="M540.5,664.2L547.0,670.2L550.5,670.2" stroke="#ff0000"/><path d="M525.5,675.2L532.0,681.2L535.5,681.2" stroke="#ff0000"/><path d="M596.5,675.2L599.5,672.2L602.5,675.2" stroke="#ff0000"/><path d="M621.5,675.2L628.0,681.2L631.5,681.2" stroke="#ff0000"/><path d="M582.5,687.2L586.0,683.7L592.5,690.2" stroke="#ff0000"/><path d="M622.5,693.2L626.0,689.7L632.5,696.2" stroke="#ff0000"/><path d="M653.5,693.2L657.0,689.7L663.5,696.2" stroke="#ff0000"/><path d="M637.5,704.2L641.0,700.7L647.5,707.2" stroke="#ff0000"/><path d="M589.5,709.2L596.0,715.2L599.5,715.2" stroke="#ff0000"/><path d="M628.5,709.2L635.0,715.2L638.5,715.2" stroke="#ff0000"/><path d="M542.5,726.7L546.0,730.2L552.5,723.7" stroke="#00ffff"/><path d="M568.5,725.2L576.5,732.2" stroke="#ff0000"/><path d="M591.5,728.2L598.0,734.2L601.5,734.2" stroke="#ff0000"/><path d="M619.5,722.2L626.0,728.2L629.5,728.2" stroke="#ff0000"/><path d="M568.5,746.7L572.0,750.2L578.5,743.7" stroke="#00ffff"/><path d="M603.5,745.2L611.5,752.2" stroke="#ff0000"/><path d="M626.5,750.2L633.0,756.7L636.5,753.2" stroke="#ff0000"/><path d="M532.5,753.7L536.0,757.2L542.5,750.7" stroke="#00ffff"/><path d="M504.5,701.2L508.0,697.7L514.5,704.2" stroke="#ff0000"/><path d="M462.5,712.7L466.0,716.2L472.5,709.7" stroke="#00ffff"/><path d="M514.5,709.7L518.0,713.2L524.5,706.7" stroke="#00ffff"/><path d="M477.5,736.7L481.0,740.2L487.5,733.7" stroke="#00ffff"/><path d="M510.5,737.7L514.0,741.2L520.5,734.7" stroke="#00ffff"/><path d="M507.5,753.7L511.0,757.2L517.5,750.7" stroke="#00ffff"/></g>
<rect x="2" y="2" width="482" height="13" fill="#fff"/>
<text x="3" y="13" font-family="Liberation Sans, sans-serif" font-weight="bold" font-size="12.5" fill="#000" textLength="480" lengthAdjust="spacingAndGlyphs" style="white-space:pre">DON 08.11.07 18:00 UTC  Bodenwettermeldungen :  Drucktendenz /  hPa/10 / 3Std</text>
</svg>
</body></html>
